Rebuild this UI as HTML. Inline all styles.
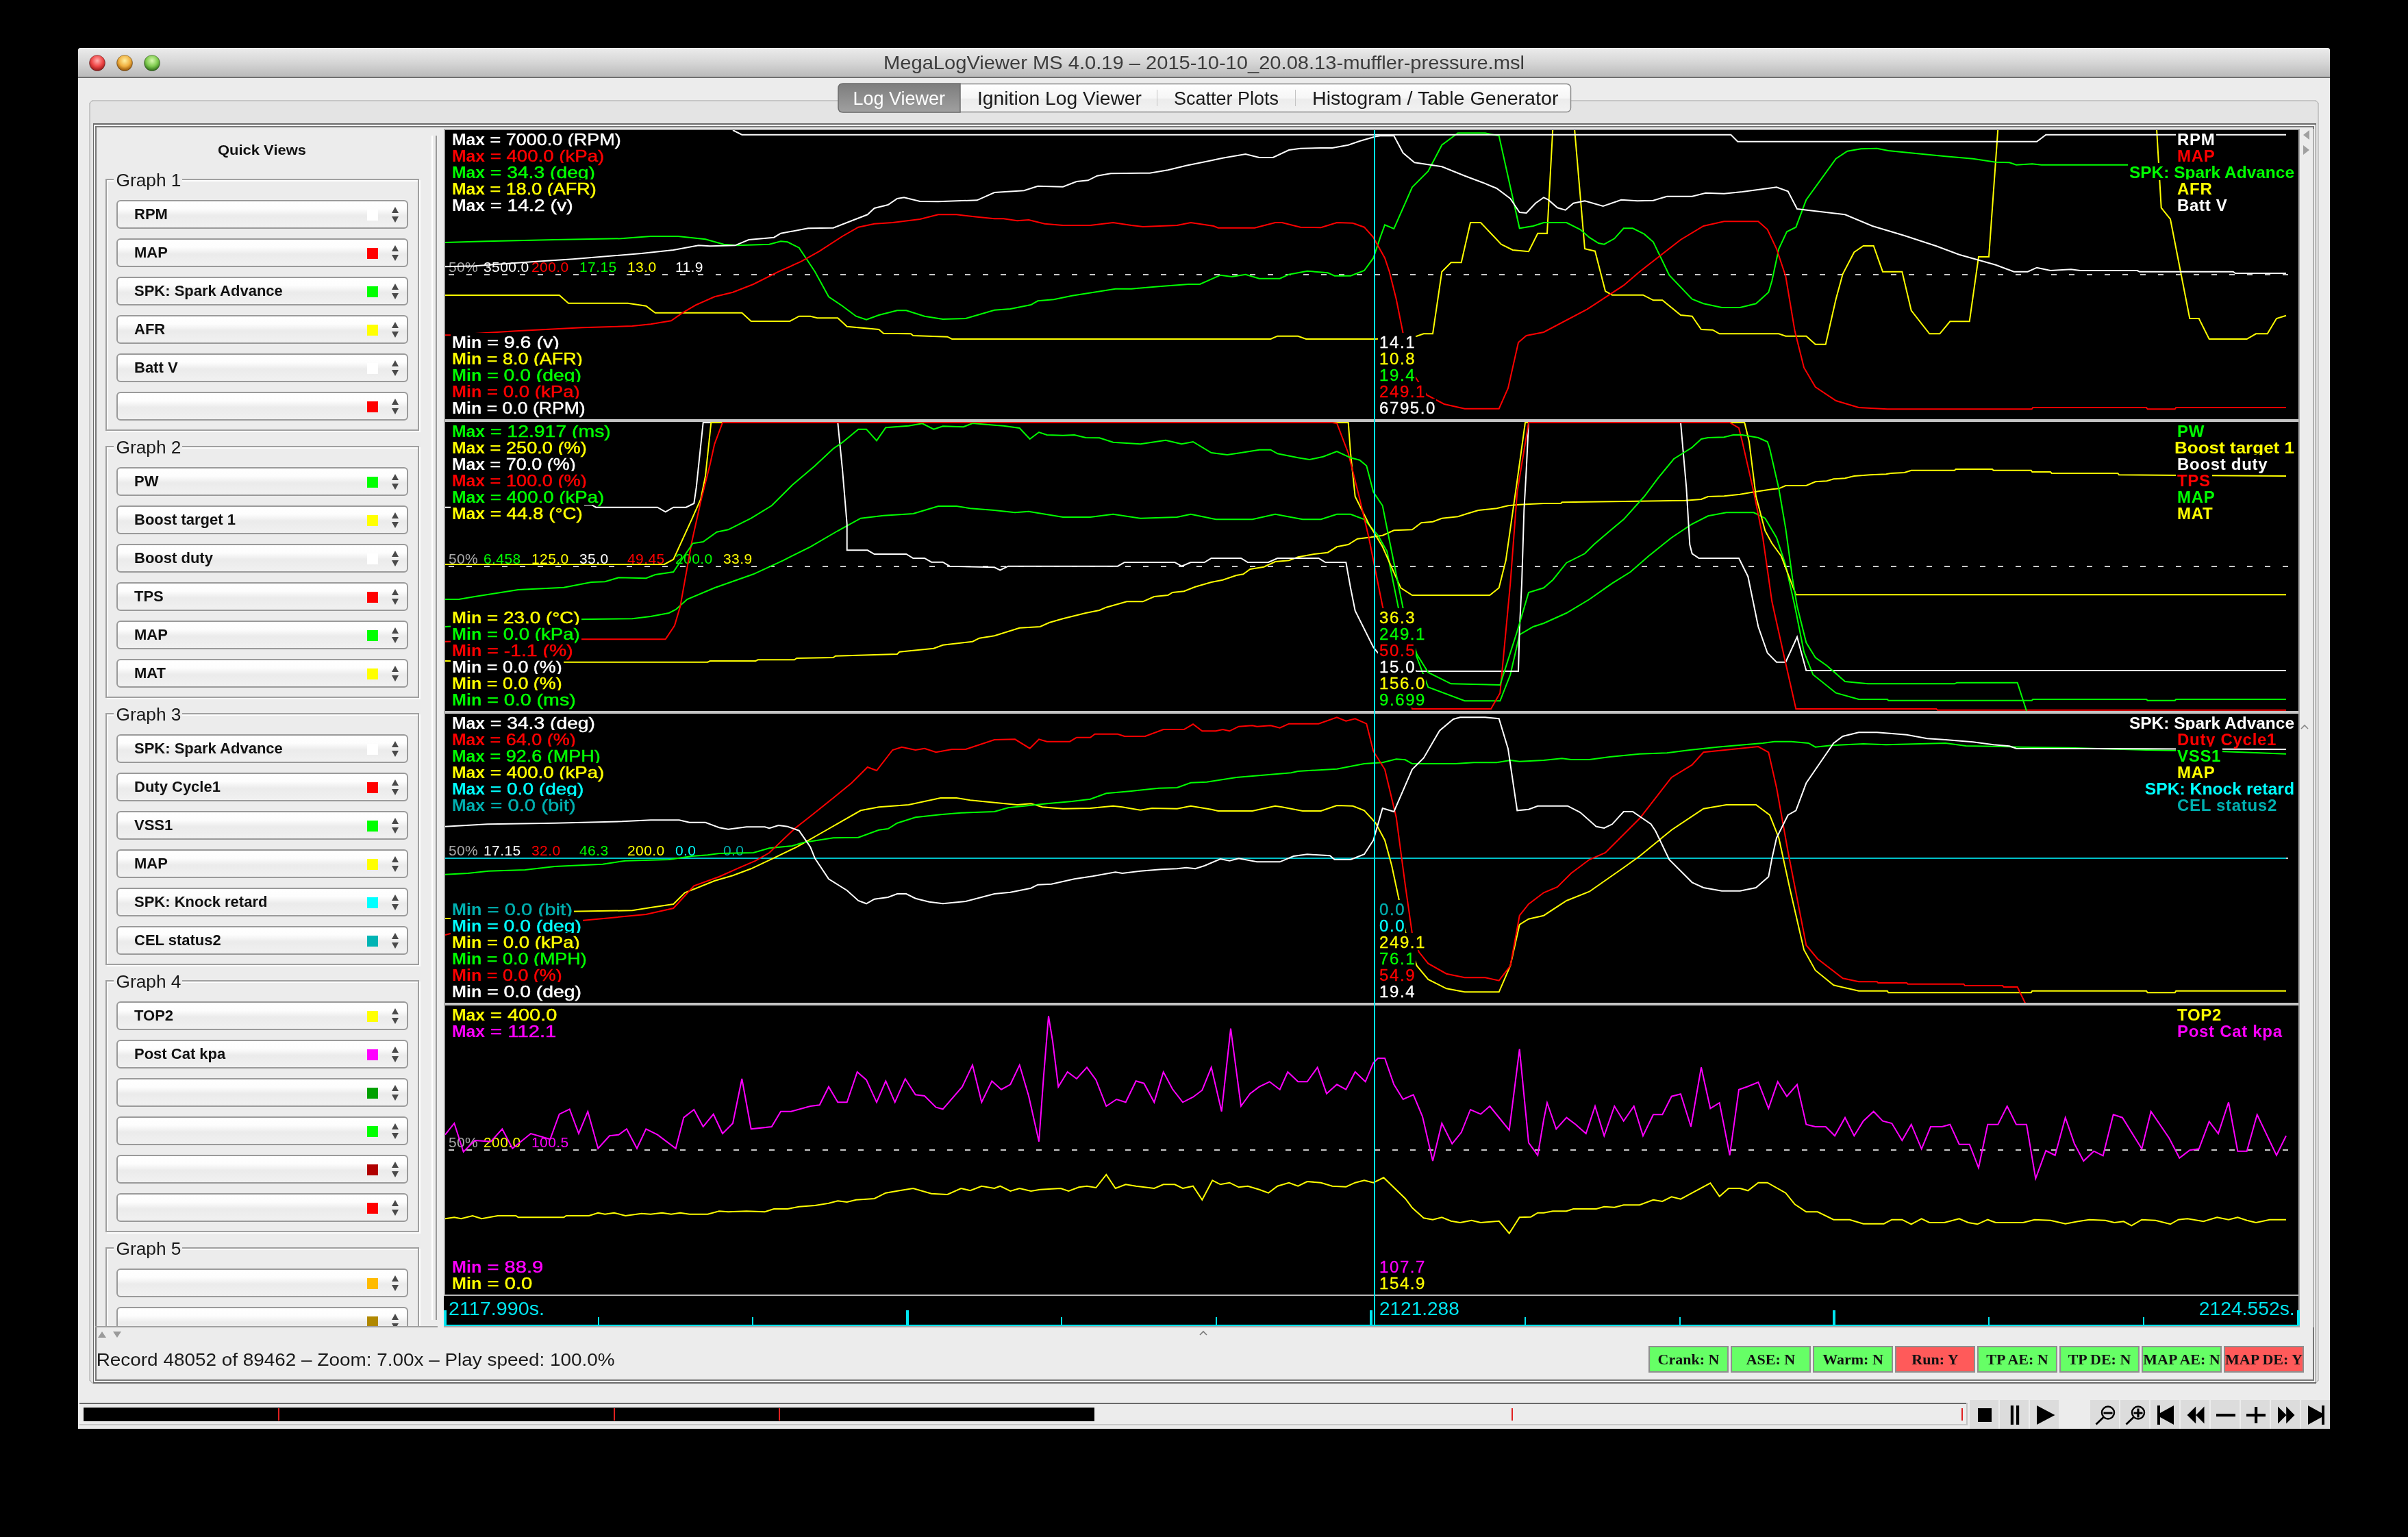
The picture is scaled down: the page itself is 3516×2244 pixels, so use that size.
<!DOCTYPE html><html><head><meta charset="utf-8"><style>html,body{margin:0;padding:0;background:#000;overflow:hidden}svg{display:block;will-change:transform}text{white-space:pre}</style></head><body>
<svg width="3516" height="2244" viewBox="0 0 3516 2244" shape-rendering="crispEdges">
<defs>
<linearGradient id="tb" x1="0" y1="0" x2="0" y2="1"><stop offset="0" stop-color="#ececec"/><stop offset="0.5" stop-color="#d6d6d6"/><stop offset="1" stop-color="#bababa"/></linearGradient>
<linearGradient id="combo" x1="0" y1="0" x2="0" y2="1"><stop offset="0" stop-color="#ffffff"/><stop offset="0.3" stop-color="#fdfdfd"/><stop offset="0.55" stop-color="#ebebeb"/><stop offset="1" stop-color="#f1f1f1"/></linearGradient>
<linearGradient id="tabsel" x1="0" y1="0" x2="0" y2="1"><stop offset="0" stop-color="#7d7d7d"/><stop offset="1" stop-color="#a0a0a0"/></linearGradient>
<linearGradient id="tabun" x1="0" y1="0" x2="0" y2="1"><stop offset="0" stop-color="#ffffff"/><stop offset="0.5" stop-color="#f6f6f6"/><stop offset="0.55" stop-color="#ececec"/><stop offset="1" stop-color="#f2f2f2"/></linearGradient>
<radialGradient id="tlr" cx="0.5" cy="0.35" r="0.6"><stop offset="0" stop-color="#ffb0b0"/><stop offset="0.6" stop-color="#f04848"/><stop offset="1" stop-color="#a02020"/></radialGradient>
<radialGradient id="tly" cx="0.5" cy="0.35" r="0.6"><stop offset="0" stop-color="#fff0a0"/><stop offset="0.6" stop-color="#f0b040"/><stop offset="1" stop-color="#a06010"/></radialGradient>
<radialGradient id="tlg" cx="0.5" cy="0.35" r="0.6"><stop offset="0" stop-color="#d8f8b0"/><stop offset="0.6" stop-color="#80cc50"/><stop offset="1" stop-color="#3a7a20"/></radialGradient>
</defs>
<path d="M114 2086 V74 Q114 70 118 70 H3398 Q3402 70 3402 74 V2086 Z" fill="#ececec" shape-rendering="geometricPrecision"/>
<path d="M114 112 V74 Q114 70 118 70 H3398 Q3402 70 3402 74 V112 Z" fill="url(#tb)" shape-rendering="geometricPrecision"/>
<rect x="114" y="112" width="3288" height="2" fill="#6f6f6f" />
<circle cx="142" cy="92" r="11.5" fill="url(#tlr)" stroke="#00000055" stroke-width="1" shape-rendering="geometricPrecision"/>
<circle cx="182" cy="92" r="11.5" fill="url(#tly)" stroke="#00000055" stroke-width="1" shape-rendering="geometricPrecision"/>
<circle cx="222" cy="92" r="11.5" fill="url(#tlg)" stroke="#00000055" stroke-width="1" shape-rendering="geometricPrecision"/>
<text x="1758" y="101" font-size="28" fill="#3c3c3c" font-family="Liberation Sans" text-anchor="middle" textLength="936" lengthAdjust="spacingAndGlyphs" >MegaLogViewer MS 4.0.19 – 2015-10-10_20.08.13-muffler-pressure.msl</text>
<rect x="131" y="147" width="3254" height="1872" rx="6" fill="#e4e4e4" stroke="#c6c6c6" stroke-width="2"/>
<rect x="136" y="180" width="3246" height="1840" fill="#6a6a6a" />
<rect x="137" y="182" width="3244" height="1836" fill="#f4f4f4" />
<rect x="139" y="184" width="3240" height="1832" fill="#777777" />
<rect x="141" y="186" width="3236" height="1828" fill="#ececec" />
<rect x="1224.5" y="122.5" width="1069" height="41" rx="6" fill="url(#tabun)" stroke="#8a8a8a" stroke-width="1.5" shape-rendering="geometricPrecision"/>
<path d="M1402 122 H1231 Q1224 122 1224 129 V157 Q1224 164 1231 164 H1402 Z" fill="url(#tabsel)" stroke="#6e6e6e" stroke-width="1.5" shape-rendering="geometricPrecision"/>
<rect x="1689" y="131" width="1" height="24" fill="#c4c4c4" />
<rect x="1891" y="131" width="1" height="24" fill="#c4c4c4" />
<text x="1245.5" y="153" font-size="28" fill="#ffffff" font-family="Liberation Sans" textLength="134.5" lengthAdjust="spacingAndGlyphs" >Log Viewer</text>
<text x="1427" y="153" font-size="28" fill="#1a1a1a" font-family="Liberation Sans" textLength="240" lengthAdjust="spacingAndGlyphs" >Ignition Log Viewer</text>
<text x="1714" y="153" font-size="28" fill="#1a1a1a" font-family="Liberation Sans" textLength="153" lengthAdjust="spacingAndGlyphs" >Scatter Plots</text>
<text x="1916" y="153" font-size="28" fill="#1a1a1a" font-family="Liberation Sans" textLength="359.5" lengthAdjust="spacingAndGlyphs" >Histogram / Table Generator</text>
<text x="318" y="225.5" font-size="20" fill="#111" font-family="Liberation Sans" font-weight="bold" textLength="129" lengthAdjust="spacingAndGlyphs" >Quick Views</text>
<svg x="0" y="0" width="3516" height="1937" overflow="hidden"><g>
<rect x="157" y="264" width="456" height="366" fill="none" stroke="#fdfdfd" stroke-width="2"/>
<rect x="155" y="262" width="456" height="366" fill="none" stroke="#a0a0a0" stroke-width="2"/>
<rect x="166" y="247" width="100" height="28" fill="#ececec" />
<text x="169.5" y="271.5" font-size="26" fill="#1a1a1a" font-family="Liberation Sans" textLength="95" lengthAdjust="spacingAndGlyphs" >Graph 1</text>
<rect x="171" y="294" width="424" height="40" rx="5" fill="#000" opacity="0.06" shape-rendering="geometricPrecision"/>
<rect x="171" y="293" width="424" height="40" rx="5" fill="url(#combo)" stroke="#9a9a9a" stroke-width="2" shape-rendering="geometricPrecision"/>
<text x="196" y="320" font-size="22" fill="#111" font-family="Liberation Sans" font-weight="bold" >RPM</text>
<rect x="536" y="306" width="16" height="16" fill="#ffffff" />
<path d="M572 311 L577 302 L582 311 Z M572 316 L582 316 L577 325 Z" fill="#4a4a4a" shape-rendering="geometricPrecision"/>
<rect x="171" y="350" width="424" height="40" rx="5" fill="#000" opacity="0.06" shape-rendering="geometricPrecision"/>
<rect x="171" y="349" width="424" height="40" rx="5" fill="url(#combo)" stroke="#9a9a9a" stroke-width="2" shape-rendering="geometricPrecision"/>
<text x="196" y="376" font-size="22" fill="#111" font-family="Liberation Sans" font-weight="bold" >MAP</text>
<rect x="536" y="362" width="16" height="16" fill="#ff0000" />
<path d="M572 367 L577 358 L582 367 Z M572 372 L582 372 L577 381 Z" fill="#4a4a4a" shape-rendering="geometricPrecision"/>
<rect x="171" y="406" width="424" height="40" rx="5" fill="#000" opacity="0.06" shape-rendering="geometricPrecision"/>
<rect x="171" y="405" width="424" height="40" rx="5" fill="url(#combo)" stroke="#9a9a9a" stroke-width="2" shape-rendering="geometricPrecision"/>
<text x="196" y="432" font-size="22" fill="#111" font-family="Liberation Sans" font-weight="bold" >SPK: Spark Advance</text>
<rect x="536" y="418" width="16" height="16" fill="#00ff00" />
<path d="M572 423 L577 414 L582 423 Z M572 428 L582 428 L577 437 Z" fill="#4a4a4a" shape-rendering="geometricPrecision"/>
<rect x="171" y="462" width="424" height="40" rx="5" fill="#000" opacity="0.06" shape-rendering="geometricPrecision"/>
<rect x="171" y="461" width="424" height="40" rx="5" fill="url(#combo)" stroke="#9a9a9a" stroke-width="2" shape-rendering="geometricPrecision"/>
<text x="196" y="488" font-size="22" fill="#111" font-family="Liberation Sans" font-weight="bold" >AFR</text>
<rect x="536" y="474" width="16" height="16" fill="#ffff00" />
<path d="M572 479 L577 470 L582 479 Z M572 484 L582 484 L577 493 Z" fill="#4a4a4a" shape-rendering="geometricPrecision"/>
<rect x="171" y="518" width="424" height="40" rx="5" fill="#000" opacity="0.06" shape-rendering="geometricPrecision"/>
<rect x="171" y="517" width="424" height="40" rx="5" fill="url(#combo)" stroke="#9a9a9a" stroke-width="2" shape-rendering="geometricPrecision"/>
<text x="196" y="544" font-size="22" fill="#111" font-family="Liberation Sans" font-weight="bold" >Batt V</text>
<rect x="536" y="530" width="16" height="16" fill="#ffffff" />
<path d="M572 535 L577 526 L582 535 Z M572 540 L582 540 L577 549 Z" fill="#4a4a4a" shape-rendering="geometricPrecision"/>
<rect x="171" y="574" width="424" height="40" rx="5" fill="#000" opacity="0.06" shape-rendering="geometricPrecision"/>
<rect x="171" y="573" width="424" height="40" rx="5" fill="url(#combo)" stroke="#9a9a9a" stroke-width="2" shape-rendering="geometricPrecision"/>
<rect x="536" y="586" width="16" height="16" fill="#ff0000" />
<path d="M572 591 L577 582 L582 591 Z M572 596 L582 596 L577 605 Z" fill="#4a4a4a" shape-rendering="geometricPrecision"/>
<rect x="157" y="654" width="456" height="366" fill="none" stroke="#fdfdfd" stroke-width="2"/>
<rect x="155" y="652" width="456" height="366" fill="none" stroke="#a0a0a0" stroke-width="2"/>
<rect x="166" y="637" width="100" height="28" fill="#ececec" />
<text x="169.5" y="661.5" font-size="26" fill="#1a1a1a" font-family="Liberation Sans" textLength="95" lengthAdjust="spacingAndGlyphs" >Graph 2</text>
<rect x="171" y="684" width="424" height="40" rx="5" fill="#000" opacity="0.06" shape-rendering="geometricPrecision"/>
<rect x="171" y="683" width="424" height="40" rx="5" fill="url(#combo)" stroke="#9a9a9a" stroke-width="2" shape-rendering="geometricPrecision"/>
<text x="196" y="710" font-size="22" fill="#111" font-family="Liberation Sans" font-weight="bold" >PW</text>
<rect x="536" y="696" width="16" height="16" fill="#00ff00" />
<path d="M572 701 L577 692 L582 701 Z M572 706 L582 706 L577 715 Z" fill="#4a4a4a" shape-rendering="geometricPrecision"/>
<rect x="171" y="740" width="424" height="40" rx="5" fill="#000" opacity="0.06" shape-rendering="geometricPrecision"/>
<rect x="171" y="739" width="424" height="40" rx="5" fill="url(#combo)" stroke="#9a9a9a" stroke-width="2" shape-rendering="geometricPrecision"/>
<text x="196" y="766" font-size="22" fill="#111" font-family="Liberation Sans" font-weight="bold" >Boost target 1</text>
<rect x="536" y="752" width="16" height="16" fill="#ffff00" />
<path d="M572 757 L577 748 L582 757 Z M572 762 L582 762 L577 771 Z" fill="#4a4a4a" shape-rendering="geometricPrecision"/>
<rect x="171" y="796" width="424" height="40" rx="5" fill="#000" opacity="0.06" shape-rendering="geometricPrecision"/>
<rect x="171" y="795" width="424" height="40" rx="5" fill="url(#combo)" stroke="#9a9a9a" stroke-width="2" shape-rendering="geometricPrecision"/>
<text x="196" y="822" font-size="22" fill="#111" font-family="Liberation Sans" font-weight="bold" >Boost duty</text>
<rect x="536" y="808" width="16" height="16" fill="#ffffff" />
<path d="M572 813 L577 804 L582 813 Z M572 818 L582 818 L577 827 Z" fill="#4a4a4a" shape-rendering="geometricPrecision"/>
<rect x="171" y="852" width="424" height="40" rx="5" fill="#000" opacity="0.06" shape-rendering="geometricPrecision"/>
<rect x="171" y="851" width="424" height="40" rx="5" fill="url(#combo)" stroke="#9a9a9a" stroke-width="2" shape-rendering="geometricPrecision"/>
<text x="196" y="878" font-size="22" fill="#111" font-family="Liberation Sans" font-weight="bold" >TPS</text>
<rect x="536" y="864" width="16" height="16" fill="#ff0000" />
<path d="M572 869 L577 860 L582 869 Z M572 874 L582 874 L577 883 Z" fill="#4a4a4a" shape-rendering="geometricPrecision"/>
<rect x="171" y="908" width="424" height="40" rx="5" fill="#000" opacity="0.06" shape-rendering="geometricPrecision"/>
<rect x="171" y="907" width="424" height="40" rx="5" fill="url(#combo)" stroke="#9a9a9a" stroke-width="2" shape-rendering="geometricPrecision"/>
<text x="196" y="934" font-size="22" fill="#111" font-family="Liberation Sans" font-weight="bold" >MAP</text>
<rect x="536" y="920" width="16" height="16" fill="#00ff00" />
<path d="M572 925 L577 916 L582 925 Z M572 930 L582 930 L577 939 Z" fill="#4a4a4a" shape-rendering="geometricPrecision"/>
<rect x="171" y="964" width="424" height="40" rx="5" fill="#000" opacity="0.06" shape-rendering="geometricPrecision"/>
<rect x="171" y="963" width="424" height="40" rx="5" fill="url(#combo)" stroke="#9a9a9a" stroke-width="2" shape-rendering="geometricPrecision"/>
<text x="196" y="990" font-size="22" fill="#111" font-family="Liberation Sans" font-weight="bold" >MAT</text>
<rect x="536" y="976" width="16" height="16" fill="#ffff00" />
<path d="M572 981 L577 972 L582 981 Z M572 986 L582 986 L577 995 Z" fill="#4a4a4a" shape-rendering="geometricPrecision"/>
<rect x="157" y="1044" width="456" height="366" fill="none" stroke="#fdfdfd" stroke-width="2"/>
<rect x="155" y="1042" width="456" height="366" fill="none" stroke="#a0a0a0" stroke-width="2"/>
<rect x="166" y="1027" width="100" height="28" fill="#ececec" />
<text x="169.5" y="1051.5" font-size="26" fill="#1a1a1a" font-family="Liberation Sans" textLength="95" lengthAdjust="spacingAndGlyphs" >Graph 3</text>
<rect x="171" y="1074" width="424" height="40" rx="5" fill="#000" opacity="0.06" shape-rendering="geometricPrecision"/>
<rect x="171" y="1073" width="424" height="40" rx="5" fill="url(#combo)" stroke="#9a9a9a" stroke-width="2" shape-rendering="geometricPrecision"/>
<text x="196" y="1100" font-size="22" fill="#111" font-family="Liberation Sans" font-weight="bold" >SPK: Spark Advance</text>
<rect x="536" y="1086" width="16" height="16" fill="#ffffff" />
<path d="M572 1091 L577 1082 L582 1091 Z M572 1096 L582 1096 L577 1105 Z" fill="#4a4a4a" shape-rendering="geometricPrecision"/>
<rect x="171" y="1130" width="424" height="40" rx="5" fill="#000" opacity="0.06" shape-rendering="geometricPrecision"/>
<rect x="171" y="1129" width="424" height="40" rx="5" fill="url(#combo)" stroke="#9a9a9a" stroke-width="2" shape-rendering="geometricPrecision"/>
<text x="196" y="1156" font-size="22" fill="#111" font-family="Liberation Sans" font-weight="bold" >Duty Cycle1</text>
<rect x="536" y="1142" width="16" height="16" fill="#ff0000" />
<path d="M572 1147 L577 1138 L582 1147 Z M572 1152 L582 1152 L577 1161 Z" fill="#4a4a4a" shape-rendering="geometricPrecision"/>
<rect x="171" y="1186" width="424" height="40" rx="5" fill="#000" opacity="0.06" shape-rendering="geometricPrecision"/>
<rect x="171" y="1185" width="424" height="40" rx="5" fill="url(#combo)" stroke="#9a9a9a" stroke-width="2" shape-rendering="geometricPrecision"/>
<text x="196" y="1212" font-size="22" fill="#111" font-family="Liberation Sans" font-weight="bold" >VSS1</text>
<rect x="536" y="1198" width="16" height="16" fill="#00ff00" />
<path d="M572 1203 L577 1194 L582 1203 Z M572 1208 L582 1208 L577 1217 Z" fill="#4a4a4a" shape-rendering="geometricPrecision"/>
<rect x="171" y="1242" width="424" height="40" rx="5" fill="#000" opacity="0.06" shape-rendering="geometricPrecision"/>
<rect x="171" y="1241" width="424" height="40" rx="5" fill="url(#combo)" stroke="#9a9a9a" stroke-width="2" shape-rendering="geometricPrecision"/>
<text x="196" y="1268" font-size="22" fill="#111" font-family="Liberation Sans" font-weight="bold" >MAP</text>
<rect x="536" y="1254" width="16" height="16" fill="#ffff00" />
<path d="M572 1259 L577 1250 L582 1259 Z M572 1264 L582 1264 L577 1273 Z" fill="#4a4a4a" shape-rendering="geometricPrecision"/>
<rect x="171" y="1298" width="424" height="40" rx="5" fill="#000" opacity="0.06" shape-rendering="geometricPrecision"/>
<rect x="171" y="1297" width="424" height="40" rx="5" fill="url(#combo)" stroke="#9a9a9a" stroke-width="2" shape-rendering="geometricPrecision"/>
<text x="196" y="1324" font-size="22" fill="#111" font-family="Liberation Sans" font-weight="bold" >SPK: Knock retard</text>
<rect x="536" y="1310" width="16" height="16" fill="#00ffff" />
<path d="M572 1315 L577 1306 L582 1315 Z M572 1320 L582 1320 L577 1329 Z" fill="#4a4a4a" shape-rendering="geometricPrecision"/>
<rect x="171" y="1354" width="424" height="40" rx="5" fill="#000" opacity="0.06" shape-rendering="geometricPrecision"/>
<rect x="171" y="1353" width="424" height="40" rx="5" fill="url(#combo)" stroke="#9a9a9a" stroke-width="2" shape-rendering="geometricPrecision"/>
<text x="196" y="1380" font-size="22" fill="#111" font-family="Liberation Sans" font-weight="bold" >CEL status2</text>
<rect x="536" y="1366" width="16" height="16" fill="#00b4b4" />
<path d="M572 1371 L577 1362 L582 1371 Z M572 1376 L582 1376 L577 1385 Z" fill="#4a4a4a" shape-rendering="geometricPrecision"/>
<rect x="157" y="1434" width="456" height="366" fill="none" stroke="#fdfdfd" stroke-width="2"/>
<rect x="155" y="1432" width="456" height="366" fill="none" stroke="#a0a0a0" stroke-width="2"/>
<rect x="166" y="1417" width="100" height="28" fill="#ececec" />
<text x="169.5" y="1441.5" font-size="26" fill="#1a1a1a" font-family="Liberation Sans" textLength="95" lengthAdjust="spacingAndGlyphs" >Graph 4</text>
<rect x="171" y="1464" width="424" height="40" rx="5" fill="#000" opacity="0.06" shape-rendering="geometricPrecision"/>
<rect x="171" y="1463" width="424" height="40" rx="5" fill="url(#combo)" stroke="#9a9a9a" stroke-width="2" shape-rendering="geometricPrecision"/>
<text x="196" y="1490" font-size="22" fill="#111" font-family="Liberation Sans" font-weight="bold" >TOP2</text>
<rect x="536" y="1476" width="16" height="16" fill="#ffff00" />
<path d="M572 1481 L577 1472 L582 1481 Z M572 1486 L582 1486 L577 1495 Z" fill="#4a4a4a" shape-rendering="geometricPrecision"/>
<rect x="171" y="1520" width="424" height="40" rx="5" fill="#000" opacity="0.06" shape-rendering="geometricPrecision"/>
<rect x="171" y="1519" width="424" height="40" rx="5" fill="url(#combo)" stroke="#9a9a9a" stroke-width="2" shape-rendering="geometricPrecision"/>
<text x="196" y="1546" font-size="22" fill="#111" font-family="Liberation Sans" font-weight="bold" >Post Cat kpa</text>
<rect x="536" y="1532" width="16" height="16" fill="#ff00ff" />
<path d="M572 1537 L577 1528 L582 1537 Z M572 1542 L582 1542 L577 1551 Z" fill="#4a4a4a" shape-rendering="geometricPrecision"/>
<rect x="171" y="1576" width="424" height="40" rx="5" fill="#000" opacity="0.06" shape-rendering="geometricPrecision"/>
<rect x="171" y="1575" width="424" height="40" rx="5" fill="url(#combo)" stroke="#9a9a9a" stroke-width="2" shape-rendering="geometricPrecision"/>
<rect x="536" y="1588" width="16" height="16" fill="#00a000" />
<path d="M572 1593 L577 1584 L582 1593 Z M572 1598 L582 1598 L577 1607 Z" fill="#4a4a4a" shape-rendering="geometricPrecision"/>
<rect x="171" y="1632" width="424" height="40" rx="5" fill="#000" opacity="0.06" shape-rendering="geometricPrecision"/>
<rect x="171" y="1631" width="424" height="40" rx="5" fill="url(#combo)" stroke="#9a9a9a" stroke-width="2" shape-rendering="geometricPrecision"/>
<rect x="536" y="1644" width="16" height="16" fill="#00ff00" />
<path d="M572 1649 L577 1640 L582 1649 Z M572 1654 L582 1654 L577 1663 Z" fill="#4a4a4a" shape-rendering="geometricPrecision"/>
<rect x="171" y="1688" width="424" height="40" rx="5" fill="#000" opacity="0.06" shape-rendering="geometricPrecision"/>
<rect x="171" y="1687" width="424" height="40" rx="5" fill="url(#combo)" stroke="#9a9a9a" stroke-width="2" shape-rendering="geometricPrecision"/>
<rect x="536" y="1700" width="16" height="16" fill="#b00000" />
<path d="M572 1705 L577 1696 L582 1705 Z M572 1710 L582 1710 L577 1719 Z" fill="#4a4a4a" shape-rendering="geometricPrecision"/>
<rect x="171" y="1744" width="424" height="40" rx="5" fill="#000" opacity="0.06" shape-rendering="geometricPrecision"/>
<rect x="171" y="1743" width="424" height="40" rx="5" fill="url(#combo)" stroke="#9a9a9a" stroke-width="2" shape-rendering="geometricPrecision"/>
<rect x="536" y="1756" width="16" height="16" fill="#ff0000" />
<path d="M572 1761 L577 1752 L582 1761 Z M572 1766 L582 1766 L577 1775 Z" fill="#4a4a4a" shape-rendering="geometricPrecision"/>
<rect x="157" y="1824" width="456" height="366" fill="none" stroke="#fdfdfd" stroke-width="2"/>
<rect x="155" y="1822" width="456" height="366" fill="none" stroke="#a0a0a0" stroke-width="2"/>
<rect x="166" y="1807" width="100" height="28" fill="#ececec" />
<text x="169.5" y="1831.5" font-size="26" fill="#1a1a1a" font-family="Liberation Sans" textLength="95" lengthAdjust="spacingAndGlyphs" >Graph 5</text>
<rect x="171" y="1854" width="424" height="40" rx="5" fill="#000" opacity="0.06" shape-rendering="geometricPrecision"/>
<rect x="171" y="1853" width="424" height="40" rx="5" fill="url(#combo)" stroke="#9a9a9a" stroke-width="2" shape-rendering="geometricPrecision"/>
<rect x="536" y="1866" width="16" height="16" fill="#ffbb00" />
<path d="M572 1871 L577 1862 L582 1871 Z M572 1876 L582 1876 L577 1885 Z" fill="#4a4a4a" shape-rendering="geometricPrecision"/>
<rect x="171" y="1910" width="424" height="40" rx="5" fill="#000" opacity="0.06" shape-rendering="geometricPrecision"/>
<rect x="171" y="1909" width="424" height="40" rx="5" fill="url(#combo)" stroke="#9a9a9a" stroke-width="2" shape-rendering="geometricPrecision"/>
<rect x="536" y="1922" width="16" height="16" fill="#b08800" />
<path d="M572 1927 L577 1918 L582 1927 Z M572 1932 L582 1932 L577 1941 Z" fill="#4a4a4a" shape-rendering="geometricPrecision"/>
</g></svg>
<rect x="139" y="1936" width="500" height="2" fill="#a0a0a0" />
<rect x="630" y="198" width="2" height="1729" fill="#ffffff" />
<rect x="636" y="198" width="2" height="1729" fill="#9a9a9a" />
<path d="M143 1953 L149 1944 L155 1953 Z M165 1944 L177 1944 L171 1953 Z" fill="#9a9a9a" shape-rendering="geometricPrecision"/>
<rect x="648" y="188" width="2710" height="1750" fill="#a8a8a8" />
<rect x="650" y="190" width="2706" height="422" fill="#000" />
<rect x="650" y="616" width="2706" height="422" fill="#000" />
<rect x="650" y="1042" width="2706" height="422" fill="#000" />
<rect x="650" y="1468" width="2706" height="422" fill="#000" />
<rect x="650" y="612" width="2706" height="4" fill="#c4c4c4" />
<rect x="650" y="1038" width="2706" height="4" fill="#c4c4c4" />
<rect x="650" y="1464" width="2706" height="4" fill="#c4c4c4" />
<rect x="648" y="1890" width="2708" height="2" fill="#b8b8b8" />
<rect x="648" y="1892" width="2708" height="42" fill="#000" />
<rect x="648" y="1934" width="2708" height="2" fill="#00e5ee" />
<rect x="3358" y="188" width="20" height="1750" fill="#ececec" />
<path d="M3372 190 L3363 197 L3372 204 Z M3363 212 L3372 219 L3363 226 Z" fill="#a0a0a0" shape-rendering="geometricPrecision"/>
<defs>
<clipPath id="cp0"><rect x="650" y="190" width="2706" height="422"/></clipPath>
<clipPath id="cp1"><rect x="650" y="616" width="2706" height="422"/></clipPath>
<clipPath id="cp2"><rect x="650" y="1042" width="2706" height="422"/></clipPath>
<clipPath id="cp3"><rect x="650" y="1468" width="2706" height="422"/></clipPath>
</defs>
<line x1="655" y1="401.0" x2="3356" y2="401.0" stroke="#c8c8c8" stroke-width="2" stroke-dasharray="8 18" shape-rendering="crispEdges"/>
<line x1="655" y1="827.0" x2="3356" y2="827.0" stroke="#c8c8c8" stroke-width="2" stroke-dasharray="8 18" shape-rendering="crispEdges"/>
<line x1="655" y1="1253.0" x2="3356" y2="1253.0" stroke="#c8c8c8" stroke-width="2" stroke-dasharray="8 18" shape-rendering="crispEdges"/>
<line x1="655" y1="1679.0" x2="3356" y2="1679.0" stroke="#c8c8c8" stroke-width="2" stroke-dasharray="8 18" shape-rendering="crispEdges"/>
<text x="655" y="397.0" font-size="21" fill="#a8a8a8" font-family="Liberation Sans" letter-spacing="0.3" >50%</text>
<text x="706" y="397.0" font-size="21" fill="#ffffff" font-family="Liberation Sans" letter-spacing="0.4" >3500.0</text>
<text x="776" y="397.0" font-size="21" fill="#ff0000" font-family="Liberation Sans" letter-spacing="0.4" >200.0</text>
<text x="846" y="397.0" font-size="21" fill="#00ff00" font-family="Liberation Sans" letter-spacing="0.4" >17.15</text>
<text x="916" y="397.0" font-size="21" fill="#ffff00" font-family="Liberation Sans" letter-spacing="0.4" >13.0</text>
<text x="986" y="397.0" font-size="21" fill="#ffffff" font-family="Liberation Sans" letter-spacing="0.4" >11.9</text>
<text x="655" y="823.0" font-size="21" fill="#a8a8a8" font-family="Liberation Sans" letter-spacing="0.3" >50%</text>
<text x="706" y="823.0" font-size="21" fill="#00ff00" font-family="Liberation Sans" letter-spacing="0.4" >6.458</text>
<text x="776" y="823.0" font-size="21" fill="#ffff00" font-family="Liberation Sans" letter-spacing="0.4" >125.0</text>
<text x="846" y="823.0" font-size="21" fill="#ffffff" font-family="Liberation Sans" letter-spacing="0.4" >35.0</text>
<text x="916" y="823.0" font-size="21" fill="#ff0000" font-family="Liberation Sans" letter-spacing="0.4" >49.45</text>
<text x="986" y="823.0" font-size="21" fill="#00ff00" font-family="Liberation Sans" letter-spacing="0.4" >200.0</text>
<text x="1056" y="823.0" font-size="21" fill="#ffff00" font-family="Liberation Sans" letter-spacing="0.4" >33.9</text>
<text x="655" y="1249.0" font-size="21" fill="#a8a8a8" font-family="Liberation Sans" letter-spacing="0.3" >50%</text>
<text x="706" y="1249.0" font-size="21" fill="#ffffff" font-family="Liberation Sans" letter-spacing="0.4" >17.15</text>
<text x="776" y="1249.0" font-size="21" fill="#ff0000" font-family="Liberation Sans" letter-spacing="0.4" >32.0</text>
<text x="846" y="1249.0" font-size="21" fill="#00ff00" font-family="Liberation Sans" letter-spacing="0.4" >46.3</text>
<text x="916" y="1249.0" font-size="21" fill="#ffff00" font-family="Liberation Sans" letter-spacing="0.4" >200.0</text>
<text x="986" y="1249.0" font-size="21" fill="#00ffff" font-family="Liberation Sans" letter-spacing="0.4" >0.0</text>
<text x="1056" y="1249.0" font-size="21" fill="#00b0b0" font-family="Liberation Sans" letter-spacing="0.4" >0.0</text>
<text x="655" y="1675.0" font-size="21" fill="#a8a8a8" font-family="Liberation Sans" letter-spacing="0.3" >50%</text>
<text x="706" y="1675.0" font-size="21" fill="#ffff00" font-family="Liberation Sans" letter-spacing="0.4" >200.0</text>
<text x="776" y="1675.0" font-size="21" fill="#ff00ff" font-family="Liberation Sans" letter-spacing="0.4" >100.5</text>
<line x1="650" y1="1253" x2="3338" y2="1253" stroke="#00c0c8" stroke-width="2"/>
<g fill="none" stroke-width="2" stroke-linejoin="miter" shape-rendering="geometricPrecision">
<polyline clip-path="url(#cp0)" points="650.0,431.0 816.7,431.0 830.0,442.7 916.7,442.7 943.3,446.7 956.7,456.7 1083.3,456.7 1096.7,469.0 1153.3,469.0 1166.7,461.7 1183.3,461.7 1193.3,464.3 1223.3,464.3 1236.7,476.7 1283.3,481.0 1290.0,486.7 1330.0,487.3 1333.3,490.0 1383.3,491.7 1390.0,495.0 1855.3,495.0 1865.3,490.7 1895.3,490.7 1907.0,495.0 2008.7,495.0 2068.7,490.7 2078.7,487.3 2092.0,487.3 2105.3,396.7 2118.7,383.3 2133.7,383.3 2147.0,325.0 2162.0,325.0 2192.0,356.7 2208.7,365.0 2232.0,367.3 2245.3,340.7 2259.0,340.7 2267.3,188.0 2299.0,188.0 2314.0,363.3 2329.0,366.7 2344.0,425.0 2354.0,430.7 2399.0,430.7 2414.0,438.3 2427.3,438.3 2454.0,460.0 2470.7,461.7 2484.0,481.0 2500.7,481.7 2510.7,487.3 2597.3,487.3 2607.3,490.7 2637.3,490.7 2650.7,502.7 2665.7,502.7 2680.7,436.7 2690.7,400.0 2707.3,368.3 2720.7,359.0 2735.7,359.0 2749.0,396.7 2777.3,396.7 2790.7,453.3 2817.3,487.3 2832.3,487.3 2847.3,469.3 2875.7,469.3 2889.0,375.0 2904.0,375.0 2917.3,188.0 3149.0,188.0 3155.7,303.3 3169.0,320.0 3197.3,465.0 3210.7,465.0 3225.7,495.0 3280.7,495.0 3294.0,487.3 3310.7,487.3 3324.0,465.0 3338.0,460.7" stroke="#ffff00"/>
<polyline clip-path="url(#cp0)" points="650.0,354.0 710.0,352.3 810.0,350.0 906.7,348.3 950.0,345.0 990.0,345.0 1030.0,349.3 1056.7,356.7 1076.7,358.3 1123.3,356.7 1140.0,352.3 1150.0,353.3 1166.7,361.7 1176.7,376.7 1190.0,396.7 1210.0,433.3 1230.0,446.7 1250.0,461.7 1265.0,466.7 1283.3,460.0 1310.0,453.3 1323.3,453.3 1350.0,461.7 1376.7,466.0 1410.0,465.0 1452.0,452.7 1475.3,451.0 1505.3,445.0 1515.3,439.3 1538.7,437.3 1565.3,431.7 1628.7,421.7 1652.0,421.7 1692.0,418.3 1735.3,415.0 1752.0,415.0 1782.0,401.7 1798.7,404.0 1818.7,400.7 1838.7,406.7 1868.7,406.7 1882.0,400.7 1908.7,395.7 1938.7,398.3 1948.7,402.7 1972.0,402.7 1992.0,395.0 2005.3,376.7 2015.3,346.7 2022.0,328.3 2035.3,334.0 2062.0,273.3 2085.3,250.0 2105.3,211.7 2122.0,199.3 2128.7,194.3 2168.7,194.3 2188.7,198.3 2218.7,333.3 2238.7,330.0 2254.0,325.0 2287.3,325.0 2307.3,335.0 2320.7,346.7 2334.0,355.0 2342.3,356.7 2357.3,348.3 2370.7,333.3 2384.0,333.3 2400.7,341.7 2414.0,353.3 2437.3,401.7 2470.7,436.7 2487.3,443.3 2514.0,449.0 2540.7,449.0 2564.0,443.3 2582.3,426.7 2587.3,410.0 2597.3,363.3 2609.0,338.3 2622.3,331.7 2637.3,291.7 2680.7,231.7 2697.3,220.7 2717.3,217.3 2740.7,216.7 2757.3,220.0 2797.3,224.0 2840.7,228.3 2880.7,231.7 2914.0,236.7 2934.0,237.3 2944.0,240.7 2967.3,239.3 2980.7,240.7 3338.0,240.7" stroke="#00ff00"/>
<polyline clip-path="url(#cp0)" points="650.0,489.3 658.0,489.3 753.3,483.3 850.0,478.3 923.3,476.0 950.0,473.3 980.0,468.3 996.7,456.7 1016.7,445.0 1043.3,433.3 1070.0,426.7 1100.0,415.0 1136.7,396.7 1170.0,381.7 1196.7,366.7 1230.0,345.0 1253.3,331.7 1276.7,326.7 1303.3,325.0 1343.3,320.0 1370.0,313.3 1396.7,313.3 1426.7,316.7 1452.0,319.3 1465.3,319.3 1485.3,322.3 1502.0,321.0 1525.3,326.7 1552.0,329.0 1592.0,329.0 1625.3,325.0 1652.0,329.0 1668.7,331.0 1718.7,329.0 1738.7,325.0 1772.0,330.0 1778.7,332.7 1832.0,332.7 1862.0,325.0 1872.0,325.0 1898.7,331.7 1928.7,332.3 1952.0,325.0 1975.3,325.7 1992.0,331.7 2005.3,346.7 2022.0,376.7 2028.7,396.7 2038.7,436.7 2048.7,486.7 2060.0,540.0 2083.3,576.7 2108.7,590.0 2138.7,596.7 2188.7,596.7 2202.0,566.7 2217.0,500.0 2228.7,490.0 2254.0,485.0 2317.3,451.7 2370.7,416.7 2394.0,396.7 2454.0,350.0 2487.3,330.0 2517.3,323.3 2567.3,323.3 2580.7,335.0 2594.0,363.3 2607.3,403.3 2620.7,483.3 2634.0,536.7 2650.7,565.0 2680.7,585.0 2714.0,595.0 2755.7,597.3 2966.7,597.3 2968.3,595.0 3134.0,595.0 3135.7,597.3 3175.7,597.3 3177.3,595.0 3338.0,595.0" stroke="#ff0000"/>
<polyline clip-path="url(#cp0)" points="650.0,389.3 693.3,388.3 783.3,381.7 836.7,378.3 936.7,370.0 983.3,365.0 1020.0,358.3 1036.7,359.3 1073.3,358.3 1093.3,350.0 1130.0,346.7 1140.0,340.7 1180.0,333.3 1216.7,332.7 1266.7,313.3 1276.7,304.0 1296.7,299.0 1310.0,290.0 1320.0,288.3 1343.3,294.0 1370.0,294.3 1426.7,292.3 1452.0,281.0 1495.3,278.3 1515.3,271.7 1552.0,272.7 1572.0,265.0 1588.7,263.3 1602.0,256.7 1622.0,253.3 1678.7,252.7 1705.3,248.3 1732.0,241.7 1765.3,235.0 1785.3,230.7 1818.7,225.0 1838.7,230.0 1858.7,230.0 1882.0,219.0 1898.7,216.7 1928.7,216.0 1945.3,216.0 1968.7,211.7 1985.3,206.0 2008.7,199.3 2015.3,198.3 2035.3,198.3 2048.7,223.3 2065.3,237.3 2105.3,243.3 2138.7,256.7 2165.3,266.7 2185.3,275.0 2205.3,290.0 2218.7,310.0 2228.7,311.0 2242.0,296.7 2254.0,288.3 2260.7,291.7 2274.0,303.3 2285.7,306.7 2297.3,296.7 2314.0,293.3 2340.7,301.0 2367.3,291.7 2390.7,293.3 2414.0,292.7 2434.0,286.7 2470.7,286.7 2490.7,281.7 2517.3,282.7 2544.0,280.0 2574.0,276.0 2594.0,273.3 2610.7,279.3 2624.0,305.0 2694.0,313.3 2734.0,330.0 2780.7,344.0 2827.3,359.3 2860.7,371.7 2914.0,386.7 2940.7,396.7 2960.7,396.7 2974.0,390.7 2994.0,395.0 3024.0,393.3 3037.3,395.0 3120.7,395.0 3124.0,396.7 3260.7,396.7 3264.0,399.0 3338.0,399.0" stroke="#ffffff"/>
<polyline clip-path="url(#cp0)" points="1070.0,190.0 1083.3,196.7 2527.3,196.7 2537.3,206.7 2974.0,206.7 2987.3,196.7 3338.0,196.7" stroke="#ffffff"/>
<polyline clip-path="url(#cp1)" points="650.0,965.0 816.7,966.7 1033.3,966.7 1036.7,965.0 1103.3,965.0 1106.7,963.3 1160.0,963.3 1163.3,961.0 1216.7,960.0 1220.0,957.7 1310.0,955.0 1313.3,951.7 1363.3,946.7 1376.7,941.7 1420.0,936.7 1430.0,931.7 1452.0,928.3 1488.7,916.7 1518.7,915.0 1532.0,909.0 1552.0,903.3 1585.3,895.0 1605.3,891.0 1615.3,886.7 1645.3,878.3 1668.7,878.3 1685.3,871.0 1705.3,869.0 1712.0,865.0 1728.7,863.3 1745.3,856.7 1768.7,850.0 1785.3,846.7 1805.3,840.0 1815.3,838.3 1825.3,831.0 1845.3,827.7 1862.0,820.0 1882.0,818.3 1895.3,813.3 1918.7,809.0 1938.7,806.7 1952.0,798.3 1968.7,795.0 1982.0,786.7 2002.0,784.3 2018.7,781.7 2035.3,774.3 2062.0,773.3 2075.3,763.3 2092.0,761.7 2105.3,756.7 2128.7,754.3 2142.0,750.0 2158.7,745.0 2185.3,742.3 2202.0,738.3 2218.7,736.7 2254.0,735.0 2279.0,735.0 2280.7,733.3 2460.7,730.7 2484.0,729.0 2494.0,725.0 2517.3,724.3 2540.7,721.7 2560.7,718.3 2587.3,714.3 2597.3,713.3 2607.3,709.0 2637.3,709.0 2650.7,703.3 2667.3,702.3 2677.3,699.3 2694.0,698.3 2707.3,695.0 2730.7,693.3 2754.0,692.3 2760.7,691.0 2780.7,690.0 2790.7,686.7 2854.0,686.7 2855.7,685.0 2909.0,685.0 2910.7,686.7 2965.7,686.7 2967.3,689.0 2994.0,689.0 2995.7,691.0 3092.3,691.0 3094.0,693.3 3338.0,695.0" stroke="#ffff00"/>
<polyline clip-path="url(#cp1)" points="650.0,915.0 843.3,904.3 923.3,903.3 950.0,900.0 976.7,895.0 986.7,890.0 1003.3,875.0 1043.3,858.3 1100.0,838.3 1143.3,818.3 1183.3,798.3 1223.3,775.0 1256.7,756.7 1290.0,752.7 1333.3,750.0 1370.0,739.0 1396.7,739.0 1416.7,742.3 1452.0,745.0 1482.0,748.3 1502.0,746.7 1552.0,755.0 1592.0,755.0 1625.3,750.7 1665.3,756.7 1718.7,755.0 1738.7,750.7 1775.3,758.3 1828.7,758.3 1862.0,750.7 1902.0,758.3 1928.7,758.3 1952.0,750.7 1972.0,750.7 1992.0,758.3 2012.0,781.7 2025.3,805.0 2042.0,888.3 2085.3,1003.3 2138.7,1023.3 2190.3,1023.3 2205.3,985.0 2218.7,926.7 2238.7,915.0 2254.0,910.0 2287.3,895.0 2320.7,875.0 2354.0,851.7 2380.7,835.0 2407.3,811.7 2440.7,785.0 2470.7,765.0 2494.0,753.3 2520.7,748.3 2560.7,748.3 2577.3,756.7 2594.0,785.0 2607.3,825.0 2620.7,885.0 2634.0,951.7 2647.3,985.0 2680.7,1011.7 2714.0,1021.0 2755.7,1021.0 2757.3,1022.7 2966.7,1022.7 2968.3,1021.0 3134.0,1021.0 3135.7,1022.7 3175.7,1022.7 3177.3,1021.0 3338.0,1021.0" stroke="#00ff00"/>
<polyline clip-path="url(#cp1)" points="650.0,740.7 656.7,740.7 863.3,736.7 870.0,740.7 960.0,740.7 971.7,747.3 983.3,740.7 1001.7,740.7 1013.3,735.0 1016.7,711.7 1026.7,617.0 1223.3,617.0 1226.7,651.7 1230.0,685.0 1236.7,765.0 1236.7,803.3 1266.7,803.3 1276.7,809.0 1323.3,809.0 1333.3,815.0 1350.0,815.0 1360.0,820.7 1376.7,820.7 1386.7,826.7 1452.0,828.3 1460.3,832.3 1472.0,826.7 1632.0,826.7 1642.0,821.0 1715.3,821.0 1725.3,826.7 1738.7,821.0 1758.7,821.0 1768.7,815.0 1812.0,815.0 1822.0,821.0 1852.0,821.0 1865.3,815.0 1925.3,815.0 1935.3,821.0 1965.3,821.0 1972.0,858.3 1978.7,891.7 2005.3,945.0 2012.0,953.3 2068.7,980.0 2217.0,980.0 2218.7,918.3 2222.0,851.7 2225.3,745.0 2228.7,685.0 2232.0,617.0 2454.0,617.0 2457.3,655.0 2462.3,711.7 2467.3,795.0 2470.7,808.3 2480.7,815.0 2539.0,815.0 2552.3,841.7 2567.3,915.0 2580.7,953.3 2594.0,966.7 2607.3,966.7 2624.0,930.0 2637.3,979.0 3338.0,979.0" stroke="#ffffff"/>
<polyline clip-path="url(#cp1)" points="650.0,824.0 970.0,824.0 983.3,816.7 1010.0,758.3 1023.3,728.3 1030.0,695.0 1038.3,617.0 1968.7,617.0 1972.0,661.7 1978.7,725.0 1998.7,765.0 2018.7,798.3 2045.3,858.3 2062.0,869.0 2175.3,869.0 2188.7,858.3 2198.7,818.3 2215.3,701.7 2227.0,617.0 2547.3,617.0 2554.0,645.0 2564.0,725.0 2577.3,775.0 2587.3,793.3 2600.7,811.7 2622.3,868.3 3338.0,868.3" stroke="#ffff00"/>
<polyline clip-path="url(#cp1)" points="650.0,936.7 843.3,933.3 971.7,933.3 985.0,913.3 993.3,885.0 1010.0,791.7 1023.3,731.7 1036.7,678.3 1043.3,648.3 1055.0,617.0 1945.3,617.0 1952.0,618.0 1968.7,661.7 1985.3,728.3 1998.7,785.0 2018.7,885.0 2062.0,1035.0 2177.0,1035.0 2190.3,1011.7 2205.3,851.7 2215.3,718.3 2232.0,617.0 2525.7,617.0 2539.0,625.0 2544.0,645.0 2560.7,718.3 2574.0,785.0 2587.3,878.3 2607.3,968.3 2622.3,1035.0 2827.3,1035.0 2829.0,1036.7 3338.0,1036.7" stroke="#ff0000"/>
<polyline clip-path="url(#cp1)" points="650.0,875.0 670.0,875.0 693.3,871.0 756.7,861.0 823.3,857.7 863.3,850.0 883.3,849.3 903.3,843.3 943.3,844.3 956.7,839.0 983.3,835.0 990.0,825.0 1011.7,793.3 1026.7,791.0 1046.7,776.7 1063.3,773.3 1096.7,756.7 1126.7,738.3 1156.7,708.3 1190.0,680.0 1216.7,655.0 1230.0,646.0 1253.3,626.7 1265.0,626.7 1280.0,643.3 1293.3,624.3 1326.7,621.7 1346.7,618.3 1363.3,626.7 1376.7,622.3 1406.7,623.3 1420.0,618.0 1452.0,620.7 1465.3,621.7 1488.7,625.0 1503.7,641.0 1517.0,631.0 1528.7,635.0 1552.0,635.7 1568.7,635.0 1585.3,639.0 1605.3,639.3 1625.3,645.7 1665.3,648.3 1702.0,642.7 1725.3,648.3 1742.0,645.0 1768.7,661.0 1792.0,664.0 1812.0,661.0 1838.7,656.7 1855.3,656.7 1865.3,662.3 1895.3,668.3 1912.0,671.0 1932.0,666.7 1952.0,659.0 1972.0,668.3 1985.3,671.7 1995.3,680.0 2005.3,718.3 2018.7,738.3 2025.3,771.7 2048.7,888.3 2068.7,955.0 2085.3,981.7 2118.7,998.3 2190.3,1000.0 2215.3,921.7 2232.0,865.0 2254.0,858.3 2267.3,846.7 2287.3,821.7 2314.0,808.3 2327.3,795.0 2350.7,775.0 2370.7,758.3 2400.7,725.0 2420.7,698.3 2444.0,670.0 2470.7,653.3 2484.0,641.0 2494.0,639.0 2517.3,638.3 2530.7,635.0 2544.0,635.0 2567.3,639.0 2580.7,645.0 2584.0,655.0 2597.3,713.3 2607.3,771.7 2617.3,845.0 2624.0,885.0 2637.3,938.3 2650.7,960.0 2667.3,971.7 2694.0,995.0 2727.3,998.3 2854.0,998.3 2857.3,996.7 2945.7,996.7 2959.0,1038.0" stroke="#00ff00"/>
<polyline clip-path="url(#cp2)" points="650.0,1341.0 656.7,1341.0 830.0,1330.7 923.3,1329.3 950.0,1325.0 983.3,1320.0 1000.0,1303.3 1016.7,1296.7 1043.3,1286.0 1070.0,1278.3 1096.7,1268.3 1130.0,1252.7 1163.3,1236.7 1210.0,1210.0 1256.7,1183.3 1283.3,1178.3 1326.7,1175.0 1373.3,1165.0 1396.7,1165.0 1416.7,1168.3 1452.0,1171.7 1485.3,1175.0 1505.3,1173.3 1522.0,1178.3 1552.0,1180.7 1592.0,1180.0 1625.3,1176.7 1638.7,1178.3 1665.3,1182.7 1682.0,1180.0 1718.7,1180.7 1738.7,1176.7 1768.7,1181.7 1778.7,1184.0 1828.7,1184.0 1862.0,1176.7 1872.0,1178.3 1902.0,1184.0 1928.7,1184.0 1952.0,1176.0 1975.3,1176.7 1992.0,1183.3 2008.7,1201.7 2022.0,1226.7 2032.0,1263.3 2042.0,1310.0 2052.0,1360.0 2068.7,1410.0 2085.3,1430.0 2112.0,1443.3 2138.7,1448.3 2188.7,1448.3 2205.3,1410.0 2218.7,1350.0 2232.0,1341.7 2254.0,1336.7 2287.3,1315.0 2320.7,1301.7 2370.7,1266.7 2394.0,1250.0 2440.7,1211.7 2487.3,1180.7 2520.7,1175.0 2564.0,1175.0 2584.0,1190.0 2597.3,1223.3 2614.0,1300.0 2634.0,1386.7 2650.7,1416.7 2677.3,1438.3 2714.0,1446.7 2755.7,1446.7 2757.3,1449.3 2965.7,1449.3 2967.3,1446.7 3134.0,1446.7 3135.7,1449.3 3175.7,1449.3 3177.3,1446.7 3338.0,1446.7" stroke="#ffff00"/>
<polyline clip-path="url(#cp2)" points="650.0,1276.7 683.3,1275.0 713.3,1271.7 766.7,1270.0 810.0,1265.0 880.0,1261.7 913.3,1256.7 976.7,1255.0 1010.0,1250.0 1033.3,1248.3 1050.0,1246.0 1100.0,1245.0 1123.3,1238.3 1156.7,1235.0 1173.3,1230.0 1216.7,1223.3 1253.3,1222.7 1283.3,1211.7 1296.7,1210.0 1310.0,1201.7 1336.7,1193.3 1373.3,1189.3 1403.3,1186.7 1452.0,1185.0 1472.0,1179.3 1528.7,1173.3 1565.3,1170.0 1592.0,1166.7 1615.3,1158.3 1652.0,1155.0 1692.0,1150.7 1718.7,1150.0 1738.7,1142.7 1762.0,1141.7 1805.3,1135.0 1832.0,1132.7 1885.3,1128.3 1895.3,1126.0 1952.0,1122.7 1992.0,1115.0 2018.7,1113.3 2038.7,1108.3 2052.0,1109.3 2062.0,1115.0 2125.3,1115.0 2152.0,1113.3 2185.3,1113.3 2205.3,1110.0 2218.7,1111.7 2254.0,1110.0 2280.7,1107.3 2294.0,1109.0 2320.7,1109.0 2350.7,1105.0 2394.0,1100.7 2434.0,1099.3 2467.3,1095.0 2507.3,1090.7 2547.3,1087.3 2574.0,1085.0 2590.7,1082.7 2615.7,1082.7 2640.7,1085.0 2650.7,1090.7 2674.0,1088.3 2720.7,1086.0 2754.0,1087.3 2840.7,1085.0 2870.7,1089.0 2950.7,1090.7 3020.7,1091.7 3134.0,1095.0 3234.0,1096.7 3274.0,1098.3 3338.0,1100.7" stroke="#00ff00"/>
<polyline clip-path="url(#cp2)" points="650.0,1365.0 656.7,1363.3 846.7,1344.3 943.3,1335.0 983.3,1326.0 1013.3,1293.3 1050.0,1280.0 1080.0,1266.7 1103.3,1256.7 1123.3,1245.0 1160.0,1210.0 1183.3,1191.7 1216.7,1165.0 1243.3,1143.3 1266.7,1120.0 1280.0,1125.0 1303.3,1095.0 1316.7,1090.7 1336.7,1095.0 1350.0,1092.7 1366.7,1098.3 1390.0,1094.0 1410.0,1094.0 1452.0,1080.0 1482.0,1079.3 1503.7,1092.7 1517.0,1079.3 1528.7,1082.7 1562.0,1082.7 1572.0,1076.7 1592.0,1076.7 1598.7,1071.7 1632.0,1071.7 1642.0,1075.0 1672.0,1075.0 1698.7,1065.0 1728.7,1065.0 1742.0,1057.3 1755.3,1067.3 1775.3,1067.3 1785.3,1065.0 1795.3,1067.3 1808.7,1060.7 1828.7,1059.3 1835.3,1060.7 1855.3,1059.3 1868.7,1062.7 1882.0,1056.7 1925.3,1056.7 1952.0,1047.3 1965.3,1052.7 1978.7,1049.3 1995.3,1056.7 2005.3,1096.7 2022.0,1123.3 2038.7,1193.3 2052.0,1293.3 2062.0,1363.3 2072.0,1390.0 2085.3,1406.7 2112.0,1421.7 2138.7,1427.3 2168.7,1427.3 2188.7,1431.7 2205.3,1410.0 2218.7,1336.7 2232.0,1320.0 2254.0,1303.3 2274.0,1295.0 2294.0,1275.0 2320.7,1255.0 2344.0,1245.0 2394.0,1195.0 2440.7,1135.0 2470.7,1116.7 2487.3,1098.3 2567.3,1090.0 2582.3,1098.3 2594.0,1150.0 2610.7,1243.3 2637.3,1380.0 2654.0,1400.0 2690.7,1428.3 2714.0,1433.3 2740.7,1433.3 2742.3,1435.0 2784.0,1435.0 2785.7,1436.7 2867.3,1436.7 2869.0,1439.0 2924.0,1439.0 2925.7,1441.0 2945.7,1441.0 2957.3,1465.0" stroke="#ff0000"/>
<polyline clip-path="url(#cp2)" points="650.0,1206.7 711.7,1203.3 810.0,1201.7 908.3,1199.3 950.0,1197.3 991.7,1197.3 1006.7,1200.7 1030.0,1200.7 1050.0,1208.3 1063.3,1210.7 1076.7,1209.0 1090.0,1207.3 1116.7,1207.3 1123.3,1209.3 1136.7,1205.0 1150.0,1206.7 1166.7,1212.7 1183.3,1236.7 1190.0,1253.3 1210.0,1283.3 1236.7,1300.0 1253.3,1315.0 1265.0,1319.3 1276.7,1312.7 1296.7,1310.0 1310.0,1305.0 1323.3,1305.0 1336.7,1311.7 1356.7,1316.7 1376.7,1319.3 1410.0,1316.0 1452.0,1305.0 1475.3,1302.7 1505.3,1296.7 1515.3,1291.7 1535.3,1290.7 1568.7,1283.3 1595.3,1279.3 1628.7,1273.3 1638.7,1275.0 1665.3,1271.7 1695.3,1269.3 1718.7,1268.3 1732.0,1266.7 1745.3,1268.3 1758.7,1264.0 1782.0,1254.0 1795.3,1256.7 1808.7,1253.3 1835.3,1258.3 1868.7,1258.3 1888.7,1250.0 1908.7,1247.3 1942.0,1249.3 1948.7,1255.0 1972.0,1255.0 1992.0,1247.3 2005.3,1226.7 2018.7,1180.0 2035.3,1185.0 2062.0,1123.3 2078.7,1106.7 2102.0,1066.7 2122.0,1050.0 2132.0,1047.3 2168.7,1047.3 2188.7,1049.3 2202.0,1093.3 2215.3,1183.3 2232.0,1181.7 2245.3,1176.7 2254.0,1176.7 2289.0,1176.7 2307.3,1186.0 2330.7,1206.7 2342.3,1209.0 2354.0,1203.3 2370.7,1185.0 2384.0,1185.0 2410.7,1203.3 2417.3,1213.3 2437.3,1255.0 2470.7,1288.3 2487.3,1296.0 2514.0,1300.7 2540.7,1300.7 2564.0,1296.0 2582.3,1280.0 2587.3,1253.3 2594.0,1223.3 2610.7,1190.0 2622.3,1183.3 2637.3,1143.3 2677.3,1085.0 2690.7,1075.0 2714.0,1069.3 2740.7,1069.3 2784.0,1072.7 2814.0,1078.3 2840.7,1080.0 2880.7,1083.3 2910.7,1087.3 2934.0,1089.3 2944.0,1092.7 3134.0,1093.3 3338.0,1094.0" stroke="#ffffff"/>
<polyline clip-path="url(#cp3)" points="650.0,1779.3 663.3,1777.3 673.3,1779.3 690.0,1775.0 703.3,1779.3 726.7,1775.0 753.3,1775.0 756.7,1777.3 823.3,1777.3 826.7,1775.0 860.0,1775.0 873.3,1770.7 883.3,1772.7 896.7,1770.7 913.3,1775.0 936.7,1771.7 950.0,1772.7 966.7,1770.7 980.0,1772.7 993.3,1770.7 1006.7,1772.7 1033.3,1772.7 1050.0,1768.3 1063.3,1769.3 1090.0,1768.3 1116.7,1769.3 1130.0,1765.0 1150.0,1765.0 1166.7,1761.7 1190.0,1760.0 1210.0,1756.7 1223.3,1753.3 1236.7,1755.0 1250.0,1751.7 1276.7,1750.0 1293.3,1741.7 1313.3,1738.3 1333.3,1735.0 1360.0,1742.7 1383.3,1744.0 1403.3,1735.0 1416.7,1738.3 1433.3,1731.7 1452.0,1735.0 1460.3,1731.7 1475.3,1739.0 1488.7,1735.0 1505.3,1739.0 1518.7,1736.7 1548.7,1735.0 1560.3,1739.0 1575.3,1733.3 1587.0,1731.7 1600.3,1734.0 1615.3,1715.0 1628.7,1735.0 1643.7,1729.3 1658.7,1731.7 1685.3,1735.0 1698.7,1729.3 1715.3,1729.3 1727.0,1735.0 1742.0,1731.7 1755.3,1751.7 1770.3,1723.3 1782.0,1729.3 1795.3,1726.7 1808.7,1733.3 1822.0,1731.7 1838.7,1736.7 1852.0,1741.7 1865.3,1731.7 1882.0,1726.7 1895.3,1731.7 1908.7,1725.0 1928.7,1726.7 1945.3,1731.7 1965.3,1732.7 1978.7,1726.7 1992.0,1723.3 2005.3,1726.7 2020.3,1719.3 2052.0,1750.0 2062.0,1763.3 2078.7,1778.3 2092.0,1780.7 2105.3,1777.3 2118.7,1782.7 2132.0,1785.0 2148.7,1781.7 2162.0,1785.0 2188.7,1782.7 2203.7,1800.7 2218.7,1777.3 2235.3,1776.7 2245.3,1770.7 2254.0,1770.7 2267.3,1768.3 2287.3,1768.3 2297.3,1765.0 2330.7,1765.0 2342.3,1761.7 2357.3,1762.7 2370.7,1759.3 2394.0,1759.3 2414.0,1751.7 2427.3,1754.0 2440.7,1747.3 2454.0,1750.7 2470.7,1741.7 2497.3,1727.3 2510.7,1746.7 2524.0,1735.0 2540.7,1735.0 2552.3,1738.3 2567.3,1726.7 2580.7,1726.7 2607.3,1741.7 2620.7,1758.3 2637.3,1769.3 2654.0,1769.3 2677.3,1780.7 2700.7,1780.7 2720.7,1786.7 2750.7,1786.7 2762.3,1780.7 2777.3,1780.7 2790.7,1787.3 2805.7,1779.3 2817.3,1785.0 2839.0,1785.0 2860.7,1779.3 2874.0,1785.0 2887.3,1787.3 2902.3,1780.7 2914.0,1785.0 2954.0,1785.0 2970.7,1780.7 2994.0,1781.7 3015.7,1786.7 3034.0,1783.3 3050.7,1780.7 3074.0,1781.7 3087.3,1785.0 3100.7,1783.3 3112.3,1789.3 3127.3,1780.7 3147.3,1781.7 3169.0,1787.3 3180.7,1780.7 3194.0,1779.3 3217.3,1783.3 3237.3,1777.3 3254.0,1780.7 3267.3,1777.3 3280.7,1781.7 3294.0,1785.0 3314.0,1780.7 3338.0,1780.7" stroke="#ffff00"/>
<polyline clip-path="url(#cp3)" points="650.0,1656.7 663.3,1640.0 676.7,1681.7 693.3,1665.0 716.7,1666.7 733.3,1648.3 748.3,1676.7 775.0,1655.0 803.3,1663.3 816.7,1626.7 831.7,1619.3 845.0,1655.0 858.3,1622.7 873.3,1676.7 890.0,1658.3 903.3,1656.7 915.0,1648.3 930.0,1676.7 943.3,1648.3 960.0,1656.7 986.7,1676.7 998.3,1631.7 1013.3,1620.0 1026.7,1645.0 1041.7,1626.7 1055.0,1655.0 1070.0,1640.0 1083.3,1575.0 1096.7,1648.3 1126.7,1645.0 1140.0,1622.7 1155.0,1622.7 1183.3,1615.0 1196.7,1613.3 1210.0,1586.7 1223.3,1609.3 1236.7,1609.3 1251.7,1565.0 1265.0,1576.7 1280.0,1609.3 1293.3,1578.3 1306.7,1609.3 1321.7,1575.0 1336.7,1598.3 1350.0,1600.0 1366.7,1616.7 1376.7,1619.3 1405.0,1586.7 1420.0,1555.0 1433.3,1609.3 1448.3,1578.3 1462.0,1590.7 1475.3,1583.3 1488.7,1555.0 1502.0,1600.0 1517.0,1666.7 1523.7,1573.3 1531.0,1483.3 1537.0,1520.0 1545.3,1586.7 1558.7,1565.0 1572.0,1575.0 1587.0,1558.3 1600.3,1576.7 1615.3,1615.0 1630.3,1605.0 1643.7,1609.3 1658.7,1578.3 1670.3,1581.7 1685.3,1609.3 1698.7,1565.0 1712.0,1590.0 1727.0,1609.3 1742.0,1601.7 1755.3,1591.7 1768.7,1558.3 1783.7,1622.7 1797.0,1501.7 1812.0,1615.0 1825.3,1596.7 1838.7,1586.7 1853.7,1579.3 1868.7,1590.7 1880.3,1565.0 1895.3,1579.3 1908.7,1579.3 1923.7,1558.3 1937.0,1596.7 1952.0,1583.3 1965.3,1590.7 1978.7,1565.0 1993.7,1579.3 2005.3,1551.7 2012.0,1545.0 2022.0,1545.0 2035.3,1583.3 2048.7,1605.0 2063.7,1598.3 2077.0,1630.0 2092.0,1695.0 2105.3,1640.0 2120.3,1670.0 2133.7,1653.3 2147.0,1620.0 2162.0,1626.7 2175.3,1615.0 2203.7,1650.0 2218.7,1531.7 2232.0,1668.3 2245.3,1686.7 2254.0,1635.0 2259.0,1610.0 2272.3,1648.3 2287.3,1631.7 2300.7,1641.7 2315.7,1655.0 2329.0,1615.0 2342.3,1658.3 2357.3,1615.0 2370.7,1636.7 2385.7,1615.0 2399.0,1658.3 2414.0,1627.3 2427.3,1627.3 2440.7,1600.7 2454.0,1597.3 2469.0,1645.0 2484.0,1558.3 2497.3,1618.3 2510.7,1610.0 2525.7,1686.7 2539.0,1590.7 2550.7,1586.7 2567.3,1580.0 2582.3,1618.3 2595.7,1579.3 2609.0,1600.7 2624.0,1583.3 2637.3,1641.7 2650.7,1645.0 2665.7,1645.0 2679.0,1658.3 2694.0,1631.7 2707.3,1658.3 2720.7,1636.7 2735.7,1622.7 2749.0,1636.7 2762.3,1640.0 2777.3,1665.0 2790.7,1641.7 2805.7,1677.3 2819.0,1645.0 2835.7,1645.0 2847.3,1641.7 2860.7,1670.7 2875.7,1670.7 2889.0,1705.0 2902.3,1641.7 2917.3,1641.7 2930.7,1615.0 2944.0,1641.7 2959.0,1641.7 2972.3,1720.7 2987.3,1680.0 3000.7,1686.7 3015.7,1631.7 3029.0,1670.0 3042.3,1695.0 3057.3,1680.7 3070.7,1687.3 3085.7,1627.3 3099.0,1631.7 3127.3,1677.3 3140.7,1622.7 3167.3,1661.7 3182.3,1690.7 3197.3,1679.3 3210.7,1677.3 3225.7,1637.3 3239.0,1655.0 3254.0,1609.3 3267.3,1680.7 3280.7,1680.7 3295.7,1627.3 3324.0,1686.7 3338.0,1658.3" stroke="#ff00ff"/>
</g>
<rect x="658" y="189.5" width="250.7" height="25" fill="#000" />
<text x="660" y="211.5" font-size="24" fill="#ffffff" font-family="Liberation Sans" font-weight="bold" textLength="48.0" lengthAdjust="spacingAndGlyphs" >Max</text>
<text x="708.0" y="211.5" font-size="24" fill="#ffffff" font-family="Liberation Sans" textLength="198.7" lengthAdjust="spacingAndGlyphs" stroke="#ffffff" stroke-width="0.45"> = 7000.0 (RPM)</text>
<rect x="658" y="213.5" width="226.3" height="25" fill="#000" />
<text x="660" y="235.5" font-size="24" fill="#ff0000" font-family="Liberation Sans" font-weight="bold" textLength="48.0" lengthAdjust="spacingAndGlyphs" >Max</text>
<text x="708.0" y="235.5" font-size="24" fill="#ff0000" font-family="Liberation Sans" textLength="174.3" lengthAdjust="spacingAndGlyphs" stroke="#ff0000" stroke-width="0.45"> = 400.0 (kPa)</text>
<rect x="658" y="237.5" width="213.0" height="25" fill="#000" />
<text x="660" y="259.5" font-size="24" fill="#00ff00" font-family="Liberation Sans" font-weight="bold" textLength="48.0" lengthAdjust="spacingAndGlyphs" >Max</text>
<text x="708.0" y="259.5" font-size="24" fill="#00ff00" font-family="Liberation Sans" textLength="161.0" lengthAdjust="spacingAndGlyphs" stroke="#00ff00" stroke-width="0.45"> = 34.3 (deg)</text>
<rect x="658" y="261.5" width="214.7" height="25" fill="#000" />
<text x="660" y="283.5" font-size="24" fill="#ffff00" font-family="Liberation Sans" font-weight="bold" textLength="48.0" lengthAdjust="spacingAndGlyphs" >Max</text>
<text x="708.0" y="283.5" font-size="24" fill="#ffff00" font-family="Liberation Sans" textLength="162.7" lengthAdjust="spacingAndGlyphs" stroke="#ffff00" stroke-width="0.45"> = 18.0 (AFR)</text>
<rect x="658" y="285.5" width="180.7" height="25" fill="#000" />
<text x="660" y="307.5" font-size="24" fill="#ffffff" font-family="Liberation Sans" font-weight="bold" textLength="48.0" lengthAdjust="spacingAndGlyphs" >Max</text>
<text x="708.0" y="307.5" font-size="24" fill="#ffffff" font-family="Liberation Sans" textLength="128.7" lengthAdjust="spacingAndGlyphs" stroke="#ffffff" stroke-width="0.45"> = 14.2 (v)</text>
<rect x="658" y="485.5" width="160.7" height="25" fill="#000" />
<text x="660" y="507.5" font-size="24" fill="#ffffff" font-family="Liberation Sans" font-weight="bold" textLength="43.3" lengthAdjust="spacingAndGlyphs" >Min</text>
<text x="703.3" y="507.5" font-size="24" fill="#ffffff" font-family="Liberation Sans" textLength="113.39999999999999" lengthAdjust="spacingAndGlyphs" stroke="#ffffff" stroke-width="0.45"> = 9.6 (v)</text>
<rect x="658" y="509.5" width="194.7" height="25" fill="#000" />
<text x="660" y="531.5" font-size="24" fill="#ffff00" font-family="Liberation Sans" font-weight="bold" textLength="43.3" lengthAdjust="spacingAndGlyphs" >Min</text>
<text x="703.3" y="531.5" font-size="24" fill="#ffff00" font-family="Liberation Sans" textLength="147.39999999999998" lengthAdjust="spacingAndGlyphs" stroke="#ffff00" stroke-width="0.45"> = 8.0 (AFR)</text>
<rect x="658" y="533.5" width="193.0" height="25" fill="#000" />
<text x="660" y="555.5" font-size="24" fill="#00ff00" font-family="Liberation Sans" font-weight="bold" textLength="43.3" lengthAdjust="spacingAndGlyphs" >Min</text>
<text x="703.3" y="555.5" font-size="24" fill="#00ff00" font-family="Liberation Sans" textLength="145.7" lengthAdjust="spacingAndGlyphs" stroke="#00ff00" stroke-width="0.45"> = 0.0 (deg)</text>
<rect x="658" y="557.5" width="190.7" height="25" fill="#000" />
<text x="660" y="579.5" font-size="24" fill="#ff0000" font-family="Liberation Sans" font-weight="bold" textLength="43.3" lengthAdjust="spacingAndGlyphs" >Min</text>
<text x="703.3" y="579.5" font-size="24" fill="#ff0000" font-family="Liberation Sans" textLength="143.39999999999998" lengthAdjust="spacingAndGlyphs" stroke="#ff0000" stroke-width="0.45"> = 0.0 (kPa)</text>
<rect x="658" y="581.5" width="198.7" height="25" fill="#000" />
<text x="660" y="603.5" font-size="24" fill="#ffffff" font-family="Liberation Sans" font-weight="bold" textLength="43.3" lengthAdjust="spacingAndGlyphs" >Min</text>
<text x="703.3" y="603.5" font-size="24" fill="#ffffff" font-family="Liberation Sans" textLength="151.39999999999998" lengthAdjust="spacingAndGlyphs" stroke="#ffffff" stroke-width="0.45"> = 0.0 (RPM)</text>
<rect x="3177" y="189.5" width="59.44375" height="25" fill="#000" />
<text x="3179" y="211.5" font-size="24" fill="#ffffff" font-family="Liberation Sans" font-weight="bold" letter-spacing="0.7" >RPM</text>
<rect x="3177" y="213.5" width="59.44375" height="25" fill="#000" />
<text x="3179" y="235.5" font-size="24" fill="#ff0000" font-family="Liberation Sans" font-weight="bold" letter-spacing="0.7" >MAP</text>
<rect x="3107" y="237.5" width="245" height="25" fill="#000" />
<text x="3109" y="259.5" font-size="24" fill="#00ff00" font-family="Liberation Sans" font-weight="bold" textLength="241" lengthAdjust="spacingAndGlyphs" >SPK: Spark Advance</text>
<rect x="3177" y="261.5" width="55.4125" height="25" fill="#000" />
<text x="3179" y="283.5" font-size="24" fill="#ffff00" font-family="Liberation Sans" font-weight="bold" letter-spacing="0.7" >AFR</text>
<rect x="3177" y="285.5" width="77.559375" height="25" fill="#000" />
<text x="3179" y="307.5" font-size="24" fill="#ffffff" font-family="Liberation Sans" font-weight="bold" letter-spacing="0.7" >Batt V</text>
<rect x="2012" y="485.5" width="55.103125" height="25" fill="#000" />
<text x="2014" y="507.5" font-size="24" fill="#ffffff" font-family="Liberation Sans" letter-spacing="1.6" stroke="#ffffff" stroke-width="0.3">14.1</text>
<rect x="2012" y="509.5" width="55.103125" height="25" fill="#000" />
<text x="2014" y="531.5" font-size="24" fill="#ffff00" font-family="Liberation Sans" letter-spacing="1.6" stroke="#ffff00" stroke-width="0.3">10.8</text>
<rect x="2012" y="533.5" width="55.103125" height="25" fill="#000" />
<text x="2014" y="555.5" font-size="24" fill="#00ff00" font-family="Liberation Sans" letter-spacing="1.6" stroke="#00ff00" stroke-width="0.3">19.4</text>
<rect x="2012" y="557.5" width="70.046875" height="25" fill="#000" />
<text x="2014" y="579.5" font-size="24" fill="#ff0000" font-family="Liberation Sans" letter-spacing="1.6" stroke="#ff0000" stroke-width="0.3">249.1</text>
<rect x="2012" y="581.5" width="84.990625" height="25" fill="#000" />
<text x="2014" y="603.5" font-size="24" fill="#ffffff" font-family="Liberation Sans" letter-spacing="1.6" stroke="#ffffff" stroke-width="0.3">6795.0</text>
<rect x="658" y="615.5" width="235.8" height="25" fill="#000" />
<text x="660" y="637.5" font-size="24" fill="#00ff00" font-family="Liberation Sans" font-weight="bold" textLength="48.0" lengthAdjust="spacingAndGlyphs" >Max</text>
<text x="708.0" y="637.5" font-size="24" fill="#00ff00" font-family="Liberation Sans" textLength="183.8" lengthAdjust="spacingAndGlyphs" stroke="#00ff00" stroke-width="0.45"> = 12.917 (ms)</text>
<rect x="658" y="639.5" width="200.7" height="25" fill="#000" />
<text x="660" y="661.5" font-size="24" fill="#ffff00" font-family="Liberation Sans" font-weight="bold" textLength="48.0" lengthAdjust="spacingAndGlyphs" >Max</text>
<text x="708.0" y="661.5" font-size="24" fill="#ffff00" font-family="Liberation Sans" textLength="148.7" lengthAdjust="spacingAndGlyphs" stroke="#ffff00" stroke-width="0.45"> = 250.0 (%)</text>
<rect x="658" y="663.5" width="184.7" height="25" fill="#000" />
<text x="660" y="685.5" font-size="24" fill="#ffffff" font-family="Liberation Sans" font-weight="bold" textLength="48.0" lengthAdjust="spacingAndGlyphs" >Max</text>
<text x="708.0" y="685.5" font-size="24" fill="#ffffff" font-family="Liberation Sans" textLength="132.7" lengthAdjust="spacingAndGlyphs" stroke="#ffffff" stroke-width="0.45"> = 70.0 (%)</text>
<rect x="658" y="687.5" width="200.7" height="25" fill="#000" />
<text x="660" y="709.5" font-size="24" fill="#ff0000" font-family="Liberation Sans" font-weight="bold" textLength="48.0" lengthAdjust="spacingAndGlyphs" >Max</text>
<text x="708.0" y="709.5" font-size="24" fill="#ff0000" font-family="Liberation Sans" textLength="148.7" lengthAdjust="spacingAndGlyphs" stroke="#ff0000" stroke-width="0.45"> = 100.0 (%)</text>
<rect x="658" y="711.5" width="226.3" height="25" fill="#000" />
<text x="660" y="733.5" font-size="24" fill="#00ff00" font-family="Liberation Sans" font-weight="bold" textLength="48.0" lengthAdjust="spacingAndGlyphs" >Max</text>
<text x="708.0" y="733.5" font-size="24" fill="#00ff00" font-family="Liberation Sans" textLength="174.3" lengthAdjust="spacingAndGlyphs" stroke="#00ff00" stroke-width="0.45"> = 400.0 (kPa)</text>
<rect x="658" y="735.5" width="194.7" height="25" fill="#000" />
<text x="660" y="757.5" font-size="24" fill="#ffff00" font-family="Liberation Sans" font-weight="bold" textLength="48.0" lengthAdjust="spacingAndGlyphs" >Max</text>
<text x="708.0" y="757.5" font-size="24" fill="#ffff00" font-family="Liberation Sans" textLength="142.7" lengthAdjust="spacingAndGlyphs" stroke="#ffff00" stroke-width="0.45"> = 44.8 (°C)</text>
<rect x="658" y="887.5" width="190.7" height="25" fill="#000" />
<text x="660" y="909.5" font-size="24" fill="#ffff00" font-family="Liberation Sans" font-weight="bold" textLength="43.3" lengthAdjust="spacingAndGlyphs" >Min</text>
<text x="703.3" y="909.5" font-size="24" fill="#ffff00" font-family="Liberation Sans" textLength="143.39999999999998" lengthAdjust="spacingAndGlyphs" stroke="#ffff00" stroke-width="0.45"> = 23.0 (°C)</text>
<rect x="658" y="911.5" width="190.7" height="25" fill="#000" />
<text x="660" y="933.5" font-size="24" fill="#00ff00" font-family="Liberation Sans" font-weight="bold" textLength="43.3" lengthAdjust="spacingAndGlyphs" >Min</text>
<text x="703.3" y="933.5" font-size="24" fill="#00ff00" font-family="Liberation Sans" textLength="143.39999999999998" lengthAdjust="spacingAndGlyphs" stroke="#00ff00" stroke-width="0.45"> = 0.0 (kPa)</text>
<rect x="658" y="935.5" width="180.7" height="25" fill="#000" />
<text x="660" y="957.5" font-size="24" fill="#ff0000" font-family="Liberation Sans" font-weight="bold" textLength="43.3" lengthAdjust="spacingAndGlyphs" >Min</text>
<text x="703.3" y="957.5" font-size="24" fill="#ff0000" font-family="Liberation Sans" textLength="133.39999999999998" lengthAdjust="spacingAndGlyphs" stroke="#ff0000" stroke-width="0.45"> = -1.1 (%)</text>
<rect x="658" y="959.5" width="164.7" height="25" fill="#000" />
<text x="660" y="981.5" font-size="24" fill="#ffffff" font-family="Liberation Sans" font-weight="bold" textLength="43.3" lengthAdjust="spacingAndGlyphs" >Min</text>
<text x="703.3" y="981.5" font-size="24" fill="#ffffff" font-family="Liberation Sans" textLength="117.39999999999999" lengthAdjust="spacingAndGlyphs" stroke="#ffffff" stroke-width="0.45"> = 0.0 (%)</text>
<rect x="658" y="983.5" width="164.7" height="25" fill="#000" />
<text x="660" y="1005.5" font-size="24" fill="#ffff00" font-family="Liberation Sans" font-weight="bold" textLength="43.3" lengthAdjust="spacingAndGlyphs" >Min</text>
<text x="703.3" y="1005.5" font-size="24" fill="#ffff00" font-family="Liberation Sans" textLength="117.39999999999999" lengthAdjust="spacingAndGlyphs" stroke="#ffff00" stroke-width="0.45"> = 0.0 (%)</text>
<rect x="658" y="1007.5" width="184.7" height="25" fill="#000" />
<text x="660" y="1029.5" font-size="24" fill="#00ff00" font-family="Liberation Sans" font-weight="bold" textLength="43.3" lengthAdjust="spacingAndGlyphs" >Min</text>
<text x="703.3" y="1029.5" font-size="24" fill="#00ff00" font-family="Liberation Sans" textLength="137.39999999999998" lengthAdjust="spacingAndGlyphs" stroke="#00ff00" stroke-width="0.45"> = 0.0 (ms)</text>
<rect x="3177" y="615.5" width="44.071875" height="25" fill="#000" />
<text x="3179" y="637.5" font-size="24" fill="#00ff00" font-family="Liberation Sans" font-weight="bold" letter-spacing="0.7" >PW</text>
<rect x="3173" y="639.5" width="179" height="25" fill="#000" />
<text x="3175" y="661.5" font-size="24" fill="#ffff00" font-family="Liberation Sans" font-weight="bold" textLength="175" lengthAdjust="spacingAndGlyphs" >Boost target 1</text>
<rect x="3177" y="663.5" width="136.3125" height="25" fill="#000" />
<text x="3179" y="685.5" font-size="24" fill="#ffffff" font-family="Liberation Sans" font-weight="bold" letter-spacing="0.7" >Boost duty</text>
<rect x="3177" y="687.5" width="52.7875" height="25" fill="#000" />
<text x="3179" y="709.5" font-size="24" fill="#ff0000" font-family="Liberation Sans" font-weight="bold" letter-spacing="0.7" >TPS</text>
<rect x="3177" y="711.5" width="59.44375" height="25" fill="#000" />
<text x="3179" y="733.5" font-size="24" fill="#00ff00" font-family="Liberation Sans" font-weight="bold" letter-spacing="0.7" >MAP</text>
<rect x="3177" y="735.5" width="56.303125" height="25" fill="#000" />
<text x="3179" y="757.5" font-size="24" fill="#ffff00" font-family="Liberation Sans" font-weight="bold" letter-spacing="0.7" >MAT</text>
<rect x="2012" y="887.5" width="55.103125" height="25" fill="#000" />
<text x="2014" y="909.5" font-size="24" fill="#ffff00" font-family="Liberation Sans" letter-spacing="1.6" stroke="#ffff00" stroke-width="0.3">36.3</text>
<rect x="2012" y="911.5" width="70.046875" height="25" fill="#000" />
<text x="2014" y="933.5" font-size="24" fill="#00ff00" font-family="Liberation Sans" letter-spacing="1.6" stroke="#00ff00" stroke-width="0.3">249.1</text>
<rect x="2012" y="935.5" width="55.103125" height="25" fill="#000" />
<text x="2014" y="957.5" font-size="24" fill="#ff0000" font-family="Liberation Sans" letter-spacing="1.6" stroke="#ff0000" stroke-width="0.3">50.5</text>
<rect x="2012" y="959.5" width="55.103125" height="25" fill="#000" />
<text x="2014" y="981.5" font-size="24" fill="#ffffff" font-family="Liberation Sans" letter-spacing="1.6" stroke="#ffffff" stroke-width="0.3">15.0</text>
<rect x="2012" y="983.5" width="70.046875" height="25" fill="#000" />
<text x="2014" y="1005.5" font-size="24" fill="#ffff00" font-family="Liberation Sans" letter-spacing="1.6" stroke="#ffff00" stroke-width="0.3">156.0</text>
<rect x="2012" y="1007.5" width="70.046875" height="25" fill="#000" />
<text x="2014" y="1029.5" font-size="24" fill="#00ff00" font-family="Liberation Sans" letter-spacing="1.6" stroke="#00ff00" stroke-width="0.3">9.699</text>
<rect x="658" y="1041.5" width="213.0" height="25" fill="#000" />
<text x="660" y="1063.5" font-size="24" fill="#ffffff" font-family="Liberation Sans" font-weight="bold" textLength="48.0" lengthAdjust="spacingAndGlyphs" >Max</text>
<text x="708.0" y="1063.5" font-size="24" fill="#ffffff" font-family="Liberation Sans" textLength="161.0" lengthAdjust="spacingAndGlyphs" stroke="#ffffff" stroke-width="0.45"> = 34.3 (deg)</text>
<rect x="658" y="1065.5" width="184.7" height="25" fill="#000" />
<text x="660" y="1087.5" font-size="24" fill="#ff0000" font-family="Liberation Sans" font-weight="bold" textLength="48.0" lengthAdjust="spacingAndGlyphs" >Max</text>
<text x="708.0" y="1087.5" font-size="24" fill="#ff0000" font-family="Liberation Sans" textLength="132.7" lengthAdjust="spacingAndGlyphs" stroke="#ff0000" stroke-width="0.45"> = 64.0 (%)</text>
<rect x="658" y="1089.5" width="220.7" height="25" fill="#000" />
<text x="660" y="1111.5" font-size="24" fill="#00ff00" font-family="Liberation Sans" font-weight="bold" textLength="48.0" lengthAdjust="spacingAndGlyphs" >Max</text>
<text x="708.0" y="1111.5" font-size="24" fill="#00ff00" font-family="Liberation Sans" textLength="168.7" lengthAdjust="spacingAndGlyphs" stroke="#00ff00" stroke-width="0.45"> = 92.6 (MPH)</text>
<rect x="658" y="1113.5" width="226.3" height="25" fill="#000" />
<text x="660" y="1135.5" font-size="24" fill="#ffff00" font-family="Liberation Sans" font-weight="bold" textLength="48.0" lengthAdjust="spacingAndGlyphs" >Max</text>
<text x="708.0" y="1135.5" font-size="24" fill="#ffff00" font-family="Liberation Sans" textLength="174.3" lengthAdjust="spacingAndGlyphs" stroke="#ffff00" stroke-width="0.45"> = 400.0 (kPa)</text>
<rect x="658" y="1137.5" width="196.3" height="25" fill="#000" />
<text x="660" y="1159.5" font-size="24" fill="#00ffff" font-family="Liberation Sans" font-weight="bold" textLength="48.0" lengthAdjust="spacingAndGlyphs" >Max</text>
<text x="708.0" y="1159.5" font-size="24" fill="#00ffff" font-family="Liberation Sans" textLength="144.3" lengthAdjust="spacingAndGlyphs" stroke="#00ffff" stroke-width="0.45"> = 0.0 (deg)</text>
<rect x="658" y="1161.5" width="184.7" height="25" fill="#000" />
<text x="660" y="1183.5" font-size="24" fill="#00b0b0" font-family="Liberation Sans" font-weight="bold" textLength="48.0" lengthAdjust="spacingAndGlyphs" >Max</text>
<text x="708.0" y="1183.5" font-size="24" fill="#00b0b0" font-family="Liberation Sans" textLength="132.7" lengthAdjust="spacingAndGlyphs" stroke="#00b0b0" stroke-width="0.45"> = 0.0 (bit)</text>
<rect x="658" y="1313.5" width="180.0" height="25" fill="#000" />
<text x="660" y="1335.5" font-size="24" fill="#00b0b0" font-family="Liberation Sans" font-weight="bold" textLength="43.3" lengthAdjust="spacingAndGlyphs" >Min</text>
<text x="703.3" y="1335.5" font-size="24" fill="#00b0b0" font-family="Liberation Sans" textLength="132.7" lengthAdjust="spacingAndGlyphs" stroke="#00b0b0" stroke-width="0.45"> = 0.0 (bit)</text>
<rect x="658" y="1337.5" width="193.0" height="25" fill="#000" />
<text x="660" y="1359.5" font-size="24" fill="#00ffff" font-family="Liberation Sans" font-weight="bold" textLength="43.3" lengthAdjust="spacingAndGlyphs" >Min</text>
<text x="703.3" y="1359.5" font-size="24" fill="#00ffff" font-family="Liberation Sans" textLength="145.7" lengthAdjust="spacingAndGlyphs" stroke="#00ffff" stroke-width="0.45"> = 0.0 (deg)</text>
<rect x="658" y="1361.5" width="190.7" height="25" fill="#000" />
<text x="660" y="1383.5" font-size="24" fill="#ffff00" font-family="Liberation Sans" font-weight="bold" textLength="43.3" lengthAdjust="spacingAndGlyphs" >Min</text>
<text x="703.3" y="1383.5" font-size="24" fill="#ffff00" font-family="Liberation Sans" textLength="143.39999999999998" lengthAdjust="spacingAndGlyphs" stroke="#ffff00" stroke-width="0.45"> = 0.0 (kPa)</text>
<rect x="658" y="1385.5" width="200.7" height="25" fill="#000" />
<text x="660" y="1407.5" font-size="24" fill="#00ff00" font-family="Liberation Sans" font-weight="bold" textLength="43.3" lengthAdjust="spacingAndGlyphs" >Min</text>
<text x="703.3" y="1407.5" font-size="24" fill="#00ff00" font-family="Liberation Sans" textLength="153.39999999999998" lengthAdjust="spacingAndGlyphs" stroke="#00ff00" stroke-width="0.45"> = 0.0 (MPH)</text>
<rect x="658" y="1409.5" width="164.7" height="25" fill="#000" />
<text x="660" y="1431.5" font-size="24" fill="#ff0000" font-family="Liberation Sans" font-weight="bold" textLength="43.3" lengthAdjust="spacingAndGlyphs" >Min</text>
<text x="703.3" y="1431.5" font-size="24" fill="#ff0000" font-family="Liberation Sans" textLength="117.39999999999999" lengthAdjust="spacingAndGlyphs" stroke="#ff0000" stroke-width="0.45"> = 0.0 (%)</text>
<rect x="658" y="1433.5" width="193.0" height="25" fill="#000" />
<text x="660" y="1455.5" font-size="24" fill="#ffffff" font-family="Liberation Sans" font-weight="bold" textLength="43.3" lengthAdjust="spacingAndGlyphs" >Min</text>
<text x="703.3" y="1455.5" font-size="24" fill="#ffffff" font-family="Liberation Sans" textLength="145.7" lengthAdjust="spacingAndGlyphs" stroke="#ffffff" stroke-width="0.45"> = 0.0 (deg)</text>
<rect x="3107" y="1041.5" width="245" height="25" fill="#000" />
<text x="3109" y="1063.5" font-size="24" fill="#ffffff" font-family="Liberation Sans" font-weight="bold" textLength="241" lengthAdjust="spacingAndGlyphs" >SPK: Spark Advance</text>
<rect x="3177" y="1065.5" width="149.075" height="25" fill="#000" />
<text x="3179" y="1087.5" font-size="24" fill="#ff0000" font-family="Liberation Sans" font-weight="bold" letter-spacing="0.7" >Duty Cycle1</text>
<rect x="3177" y="1089.5" width="68.190625" height="25" fill="#000" />
<text x="3179" y="1111.5" font-size="24" fill="#00ff00" font-family="Liberation Sans" font-weight="bold" letter-spacing="0.7" >VSS1</text>
<rect x="3177" y="1113.5" width="59.44375" height="25" fill="#000" />
<text x="3179" y="1135.5" font-size="24" fill="#ffff00" font-family="Liberation Sans" font-weight="bold" letter-spacing="0.7" >MAP</text>
<rect x="3129.7" y="1137.5" width="222.3" height="25" fill="#000" />
<text x="3131.7" y="1159.5" font-size="24" fill="#00ffff" font-family="Liberation Sans" font-weight="bold" textLength="218.3" lengthAdjust="spacingAndGlyphs" >SPK: Knock retard</text>
<rect x="3177" y="1161.5" width="149.965625" height="25" fill="#000" />
<text x="3179" y="1183.5" font-size="24" fill="#00b0b0" font-family="Liberation Sans" font-weight="bold" letter-spacing="0.7" >CEL status2</text>
<rect x="2012" y="1313.5" width="40.159375" height="25" fill="#000" />
<text x="2014" y="1335.5" font-size="24" fill="#00b0b0" font-family="Liberation Sans" letter-spacing="1.6" stroke="#00b0b0" stroke-width="0.3">0.0</text>
<rect x="2012" y="1337.5" width="40.159375" height="25" fill="#000" />
<text x="2014" y="1359.5" font-size="24" fill="#00ffff" font-family="Liberation Sans" letter-spacing="1.6" stroke="#00ffff" stroke-width="0.3">0.0</text>
<rect x="2012" y="1361.5" width="70.046875" height="25" fill="#000" />
<text x="2014" y="1383.5" font-size="24" fill="#ffff00" font-family="Liberation Sans" letter-spacing="1.6" stroke="#ffff00" stroke-width="0.3">249.1</text>
<rect x="2012" y="1385.5" width="55.103125" height="25" fill="#000" />
<text x="2014" y="1407.5" font-size="24" fill="#00ff00" font-family="Liberation Sans" letter-spacing="1.6" stroke="#00ff00" stroke-width="0.3">76.1</text>
<rect x="2012" y="1409.5" width="55.103125" height="25" fill="#000" />
<text x="2014" y="1431.5" font-size="24" fill="#ff0000" font-family="Liberation Sans" letter-spacing="1.6" stroke="#ff0000" stroke-width="0.3">54.9</text>
<rect x="2012" y="1433.5" width="55.103125" height="25" fill="#000" />
<text x="2014" y="1455.5" font-size="24" fill="#ffffff" font-family="Liberation Sans" letter-spacing="1.6" stroke="#ffffff" stroke-width="0.3">19.4</text>
<rect x="658" y="1467.5" width="157.3" height="25" fill="#000" />
<text x="660" y="1489.5" font-size="24" fill="#ffff00" font-family="Liberation Sans" font-weight="bold" textLength="48.0" lengthAdjust="spacingAndGlyphs" >Max</text>
<text x="708.0" y="1489.5" font-size="24" fill="#ffff00" font-family="Liberation Sans" textLength="105.30000000000001" lengthAdjust="spacingAndGlyphs" stroke="#ffff00" stroke-width="0.45"> = 400.0</text>
<rect x="658" y="1491.5" width="156.3" height="25" fill="#000" />
<text x="660" y="1513.5" font-size="24" fill="#ff00ff" font-family="Liberation Sans" font-weight="bold" textLength="48.0" lengthAdjust="spacingAndGlyphs" >Max</text>
<text x="708.0" y="1513.5" font-size="24" fill="#ff00ff" font-family="Liberation Sans" textLength="104.30000000000001" lengthAdjust="spacingAndGlyphs" stroke="#ff00ff" stroke-width="0.45"> = 112.1</text>
<rect x="658" y="1835.5" width="137.3" height="25" fill="#000" />
<text x="660" y="1857.5" font-size="24" fill="#ff00ff" font-family="Liberation Sans" font-weight="bold" textLength="43.3" lengthAdjust="spacingAndGlyphs" >Min</text>
<text x="703.3" y="1857.5" font-size="24" fill="#ff00ff" font-family="Liberation Sans" textLength="90.00000000000001" lengthAdjust="spacingAndGlyphs" stroke="#ff00ff" stroke-width="0.45"> = 88.9</text>
<rect x="658" y="1859.5" width="121.3" height="25" fill="#000" />
<text x="660" y="1881.5" font-size="24" fill="#ffff00" font-family="Liberation Sans" font-weight="bold" textLength="43.3" lengthAdjust="spacingAndGlyphs" >Min</text>
<text x="703.3" y="1881.5" font-size="24" fill="#ffff00" font-family="Liberation Sans" textLength="74.0" lengthAdjust="spacingAndGlyphs" stroke="#ffff00" stroke-width="0.45"> = 0.0</text>
<rect x="3177" y="1467.5" width="69.05" height="25" fill="#000" />
<text x="3179" y="1489.5" font-size="24" fill="#ffff00" font-family="Liberation Sans" font-weight="bold" letter-spacing="0.7" >TOP2</text>
<rect x="3177" y="1491.5" width="157.775" height="25" fill="#000" />
<text x="3179" y="1513.5" font-size="24" fill="#ff00ff" font-family="Liberation Sans" font-weight="bold" letter-spacing="0.7" >Post Cat kpa</text>
<rect x="2012" y="1835.5" width="70.046875" height="25" fill="#000" />
<text x="2014" y="1857.5" font-size="24" fill="#ff00ff" font-family="Liberation Sans" letter-spacing="1.6" stroke="#ff00ff" stroke-width="0.3">107.7</text>
<rect x="2012" y="1859.5" width="70.046875" height="25" fill="#000" />
<text x="2014" y="1881.5" font-size="24" fill="#ffff00" font-family="Liberation Sans" letter-spacing="1.6" stroke="#ffff00" stroke-width="0.3">154.9</text>
<rect x="2006" y="190" width="2" height="1745" fill="#00e5f0" />
<rect x="648" y="1913" width="4" height="22" fill="#00e5f0" />
<rect x="872.6" y="1923" width="2" height="12" fill="#00e5f0" />
<rect x="1098.2" y="1923" width="2" height="12" fill="#00e5f0" />
<rect x="1322.8" y="1913" width="4" height="22" fill="#00e5f0" />
<rect x="1549.4" y="1923" width="2" height="12" fill="#00e5f0" />
<rect x="1775.0" y="1923" width="2" height="12" fill="#00e5f0" />
<rect x="1999.6" y="1913" width="4" height="22" fill="#00e5f0" />
<rect x="2226.2" y="1923" width="2" height="12" fill="#00e5f0" />
<rect x="2451.8" y="1923" width="2" height="12" fill="#00e5f0" />
<rect x="2676.3999999999996" y="1913" width="4" height="22" fill="#00e5f0" />
<rect x="2903.0" y="1923" width="2" height="12" fill="#00e5f0" />
<rect x="3128.6" y="1923" width="2" height="12" fill="#00e5f0" />
<rect x="3354" y="1913" width="4" height="22" fill="#00e5f0" />
<text x="655" y="1919.5" font-size="27" fill="#00e5f0" font-family="Liberation Sans" textLength="140" lengthAdjust="spacingAndGlyphs" >2117.990s.</text>
<text x="2014" y="1919.5" font-size="27" fill="#00e5f0" font-family="Liberation Sans" textLength="116.7" lengthAdjust="spacingAndGlyphs" >2121.288</text>
<text x="3210.7" y="1919.5" font-size="27" fill="#00e5f0" font-family="Liberation Sans" textLength="140" lengthAdjust="spacingAndGlyphs" >2124.552s.</text>
<path d="M1752 1949 L1757 1944 L1762 1949" fill="none" stroke="#777" stroke-width="1.6" shape-rendering="geometricPrecision"/>
<path d="M3360 1064 L3365 1059 L3370 1064" fill="none" stroke="#888" stroke-width="1.6" shape-rendering="geometricPrecision"/>
<text x="140.7" y="1994" font-size="26" fill="#1a1a1a" font-family="Liberation Sans" textLength="757" lengthAdjust="spacingAndGlyphs" >Record 48052 of 89462 – Zoom: 7.00x – Play speed: 100.0%</text>
<clipPath id="ind0"><rect x="2408" y="1966" width="115" height="37"/></clipPath>
<rect x="2408" y="1966" width="115" height="37" fill="#66ff66" stroke="#8f8f8f" stroke-width="1.5"/>
<text x="2465.5" y="1992" font-size="22" fill="#111" font-family="Liberation Serif" font-weight="bold" text-anchor="middle" clip-path="url(#ind0)">Crank: N</text>
<clipPath id="ind1"><rect x="2528" y="1966" width="115" height="37"/></clipPath>
<rect x="2528" y="1966" width="115" height="37" fill="#66ff66" stroke="#8f8f8f" stroke-width="1.5"/>
<text x="2585.5" y="1992" font-size="22" fill="#111" font-family="Liberation Serif" font-weight="bold" text-anchor="middle" clip-path="url(#ind1)">ASE: N</text>
<clipPath id="ind2"><rect x="2648" y="1966" width="115" height="37"/></clipPath>
<rect x="2648" y="1966" width="115" height="37" fill="#66ff66" stroke="#8f8f8f" stroke-width="1.5"/>
<text x="2705.5" y="1992" font-size="22" fill="#111" font-family="Liberation Serif" font-weight="bold" text-anchor="middle" clip-path="url(#ind2)">Warm: N</text>
<clipPath id="ind3"><rect x="2768" y="1966" width="115" height="37"/></clipPath>
<rect x="2768" y="1966" width="115" height="37" fill="#ff5a5a" stroke="#8f8f8f" stroke-width="1.5"/>
<text x="2825.5" y="1992" font-size="22" fill="#111" font-family="Liberation Serif" font-weight="bold" text-anchor="middle" clip-path="url(#ind3)">Run: Y</text>
<clipPath id="ind4"><rect x="2888" y="1966" width="115" height="37"/></clipPath>
<rect x="2888" y="1966" width="115" height="37" fill="#66ff66" stroke="#8f8f8f" stroke-width="1.5"/>
<text x="2945.5" y="1992" font-size="22" fill="#111" font-family="Liberation Serif" font-weight="bold" text-anchor="middle" clip-path="url(#ind4)">TP AE: N</text>
<clipPath id="ind5"><rect x="3008" y="1966" width="115" height="37"/></clipPath>
<rect x="3008" y="1966" width="115" height="37" fill="#66ff66" stroke="#8f8f8f" stroke-width="1.5"/>
<text x="3065.5" y="1992" font-size="22" fill="#111" font-family="Liberation Serif" font-weight="bold" text-anchor="middle" clip-path="url(#ind5)">TP DE: N</text>
<clipPath id="ind6"><rect x="3128" y="1966" width="115" height="37"/></clipPath>
<rect x="3128" y="1966" width="115" height="37" fill="#66ff66" stroke="#8f8f8f" stroke-width="1.5"/>
<text x="3185.5" y="1992" font-size="22" fill="#111" font-family="Liberation Serif" font-weight="bold" text-anchor="middle" clip-path="url(#ind6)">MAP AE: N</text>
<clipPath id="ind7"><rect x="3248" y="1966" width="115" height="37"/></clipPath>
<rect x="3248" y="1966" width="115" height="37" fill="#ff5a5a" stroke="#8f8f8f" stroke-width="1.5"/>
<text x="3305.5" y="1992" font-size="22" fill="#111" font-family="Liberation Serif" font-weight="bold" text-anchor="middle" clip-path="url(#ind7)">MAP DE: Y</text>
<rect x="116" y="2048" width="2756" height="33" fill="#ececec" />
<rect x="116" y="2048" width="2756" height="2" fill="#6a6a6a" />
<rect x="116" y="2079" width="2756" height="2" fill="#c8c8c8" />
<rect x="122" y="2055" width="1476" height="20" fill="#000" />
<rect x="2871" y="2048" width="2" height="33" fill="#c4c4c4" />
<rect x="406" y="2056" width="2" height="18" fill="#e02020" />
<rect x="896" y="2056" width="2" height="18" fill="#e02020" />
<rect x="1137" y="2056" width="2" height="18" fill="#e02020" />
<rect x="2207" y="2056" width="2" height="18" fill="#e02020" />
<rect x="2864" y="2056" width="2" height="18" fill="#e02020" />
<rect x="2876" y="2044" width="42" height="42" fill="#dcdcdc" />
<rect x="2920" y="2044" width="42" height="42" fill="#dcdcdc" />
<rect x="2964" y="2044" width="42" height="42" fill="#dcdcdc" />
<rect x="3052" y="2044" width="42" height="42" fill="#dcdcdc" />
<rect x="3096" y="2044" width="42" height="42" fill="#dcdcdc" />
<rect x="3140" y="2044" width="42" height="42" fill="#dcdcdc" />
<rect x="3184" y="2044" width="42" height="42" fill="#dcdcdc" />
<rect x="3228" y="2044" width="42" height="42" fill="#dcdcdc" />
<rect x="3272" y="2044" width="42" height="42" fill="#dcdcdc" />
<rect x="3316" y="2044" width="42" height="42" fill="#dcdcdc" />
<rect x="3360" y="2044" width="42" height="42" fill="#dcdcdc" />
<g fill="#000" shape-rendering="geometricPrecision">
<rect x="2888" y="2056" width="20" height="20"/>
<rect x="2935.8" y="2052" width="4.2" height="28"/><rect x="2944" y="2052" width="4.2" height="28"/>
<path d="M2974 2052 L3000.5 2066 L2974 2080 Z"/>
<path d="M3150 2052 h4 v11 L3174 2052 V2080 L3154 2069 V2080 h-4 Z"/>
<path d="M3193.5 2066 L3206.2 2053.5 V2078.5 Z M3206.2 2066 L3218.5 2053.5 V2078.5 Z"/>
<rect x="3236" y="2064" width="28" height="4.2"/>
<rect x="3280" y="2064" width="28" height="4.2"/><rect x="3292" y="2054" width="4.2" height="24"/>
<path d="M3326 2053.5 L3338.5 2066 L3326 2078.5 Z M3338.2 2053.5 L3350.5 2066 L3338.2 2078.5 Z"/>
<path d="M3370 2052 L3390 2063 V2052 h4 V2080 h-4 V2069 L3370 2080 Z"/>
</g>
<g fill="none" stroke="#000" stroke-width="2.4" shape-rendering="geometricPrecision">
<circle cx="3078" cy="2062.5" r="9"/><circle cx="3122" cy="2062.5" r="9"/>
<path d="M3071 2069.5 L3060.5 2079.5 M3115 2069.5 L3104.5 2079.5" stroke-width="2.8"/>
<path d="M3071.5 2063 H3084.5 M3115.5 2063 H3128.5 M3122 2056.5 V2069.5" stroke-width="3.2"/>
</g>
</svg></body></html>
